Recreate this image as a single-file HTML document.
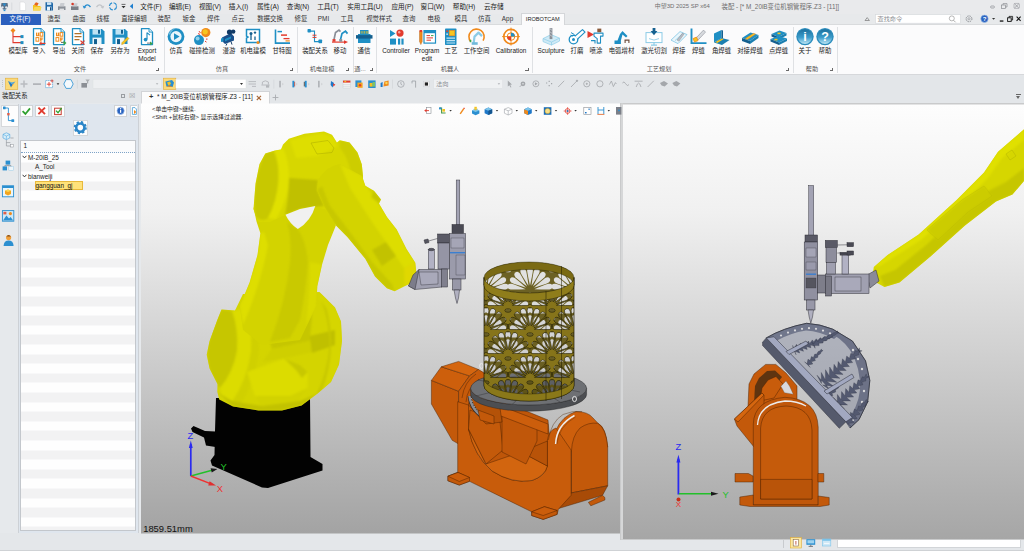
<!DOCTYPE html>
<html lang="zh-CN"><head><meta charset="utf-8"><title>ZW3D 2025</title>
<style>
*{box-sizing:border-box;margin:0;padding:0}
html,body{width:1024px;height:551px;overflow:hidden;background:#e4e7ea}
body{position:relative;font-family:"Liberation Sans","Noto Sans CJK SC",sans-serif;font-size:6.4px;color:#222;line-height:1}
.a{position:absolute;white-space:nowrap}
.c{position:absolute;white-space:nowrap;transform:translateX(-50%);text-align:center}
#title{left:0;top:0;width:1024px;height:14px;background:#e9eaec}
#tabs{left:0;top:14px;width:1024px;height:11px;background:#e7e9eb}
#ribbon{left:0;top:24.3px;width:1024px;height:50.5px;background:#fbfbfc;border-top:1px solid #d9dbdd;border-bottom:1px solid #d6d8db}
#tb{left:0;top:75px;width:1024px;height:15px;background:#e3e6e9}
#hdr{left:0;top:90px;width:1024px;height:14px;background:#e3e6e9}
.menu{top:3.5px;font-size:6.6px;color:#1a1a1a}
.tab{top:16.2px;font-size:6.4px;color:#333}
.lbl{top:46.5px;font-size:6.4px;color:#222;line-height:8px}
.grp{top:66px;font-size:6.2px;color:#555}
.sep{position:absolute;top:27px;width:1px;height:46px;background:#dfe1e4}
.dl{position:absolute;top:67.6px;width:3.2px;height:3.2px;border-right:0.9px solid #6a6a6a;border-bottom:0.9px solid #6a6a6a}
</style></head>
<body>
<div class="a" id="title"></div>
<div class="a" id="tabs"></div>
<div class="a" id="ribbon"></div>
<div class="a" id="tb"></div>
<div class="a" id="hdr"></div>
<div class="c menu" style="left:151px">文件(F)</div>
<div class="c menu" style="left:180px">编辑(E)</div>
<div class="c menu" style="left:210px">视图(V)</div>
<div class="c menu" style="left:238.5px">插入(I)</div>
<div class="c menu" style="left:268px">属性(A)</div>
<div class="c menu" style="left:298px">查询(N)</div>
<div class="c menu" style="left:328px">工具(T)</div>
<div class="c menu" style="left:365px">实用工具(U)</div>
<div class="c menu" style="left:402.5px">应用(P)</div>
<div class="c menu" style="left:432.5px">窗口(W)</div>
<div class="c menu" style="left:464px">帮助(H)</div>
<div class="c menu" style="left:493.8px">云存储</div>
<div class="c" id="t1" style="left:682.3px;top:3.7px;font-size:5.95px;color:#6e6e6e">中望3D 2025 SP x64</div>
<div class="c" id="t2" style="left:780.3px;top:3.5px;font-size:6.38px;color:#6e6e6e">装配 - [* M_20iB变位机钢管程序.Z3 - [11]]</div>
<div class="a" style="left:1px;top:14px;width:39.5px;height:10.5px;background:#2b5fbe"></div>
<div class="c tab" style="left:20px;color:#fff">文件(F)</div>
<div class="c tab" style="left:54px">造型</div>
<div class="c tab" style="left:79px">曲面</div>
<div class="c tab" style="left:103px">线框</div>
<div class="c tab" style="left:134px">直接编辑</div>
<div class="c tab" style="left:164px">装配</div>
<div class="c tab" style="left:189px">钣金</div>
<div class="c tab" style="left:213.5px">焊件</div>
<div class="c tab" style="left:238px">点云</div>
<div class="c tab" style="left:270px">数据交换</div>
<div class="c tab" style="left:301px">修复</div>
<div class="c tab" style="left:323.5px">PMI</div>
<div class="c tab" style="left:347px">工具</div>
<div class="c tab" style="left:379px">视觉样式</div>
<div class="c tab" style="left:409px">查询</div>
<div class="c tab" style="left:434px">电极</div>
<div class="c tab" style="left:461px">模具</div>
<div class="c tab" style="left:484.5px">仿真</div>
<div class="c tab" style="left:507.5px">App</div>
<div class="a" style="left:520.7px;top:13.3px;width:44.6px;height:12px;background:#fbfbfc;border:1px solid #d4d6d9;border-bottom:none"></div>
<div class="c tab" id="t3" style="left:542.8px;color:#222;font-size:5.6px;top:16.8px">IROBOTCAM</div>
<div class="c lbl" style="left:18px">模型库</div>
<div class="c lbl" style="left:39px">导入</div>
<div class="c lbl" style="left:59px">导出</div>
<div class="c lbl" style="left:78px">关闭</div>
<div class="c lbl" style="left:97px">保存</div>
<div class="c lbl" style="left:120px">另存为</div>
<div class="c lbl" style="left:147px">Export<br>Model</div>
<div class="c lbl" style="left:176px">仿真</div>
<div class="c lbl" style="left:202px">碰撞检测</div>
<div class="c lbl" style="left:229px">漫游</div>
<div class="c lbl" style="left:253px">机电建模</div>
<div class="c lbl" style="left:282px">甘特图</div>
<div class="c lbl" style="left:315px">装配关系</div>
<div class="c lbl" style="left:340px">移动</div>
<div class="c lbl" style="left:364px">通信</div>
<div class="c lbl" style="left:396px">Controller</div>
<div class="c lbl" style="left:427px">Program<br>edit</div>
<div class="c lbl" style="left:451px">工艺</div>
<div class="c lbl" style="left:476.5px">工作空间</div>
<div class="c lbl" style="left:511px">Calibration</div>
<div class="c lbl" style="left:551px">Sculpture</div>
<div class="c lbl" style="left:577px">打磨</div>
<div class="c lbl" style="left:596px">喷涂</div>
<div class="c lbl" style="left:621.5px">电弧增材</div>
<div class="c lbl" style="left:654px">激光切割</div>
<div class="c lbl" style="left:679px">焊接</div>
<div class="c lbl" style="left:698.5px">焊缝</div>
<div class="c lbl" style="left:721.5px">角焊缝</div>
<div class="c lbl" style="left:750px">对接焊缝</div>
<div class="c lbl" style="left:778.5px">点焊缝</div>
<div class="c lbl" style="left:805px">关于</div>
<div class="c lbl" style="left:825px">帮助</div>
<div class="sep" style="left:163.6px"></div>
<div class="sep" style="left:296.6px"></div>
<div class="sep" style="left:352.8px"></div>
<div class="sep" style="left:376.3px"></div>
<div class="sep" style="left:532.4px"></div>
<div class="sep" style="left:792.8px"></div>
<div class="sep" style="left:837px"></div>
<div class="c grp" style="left:80px">文件</div>
<div class="c grp" style="left:222px">仿真</div>
<div class="c grp" style="left:322px">机电建模</div>
<div class="c grp" style="left:360px">通...</div>
<div class="c grp" style="left:450px">机器人</div>
<div class="c grp" style="left:659px">工艺规划</div>
<div class="c grp" style="left:812px">帮助</div>
<div class="dl" style="left:156.3px"></div>
<div class="dl" style="left:289.6px"></div>
<div class="dl" style="left:346px"></div>
<div class="dl" style="left:369.6px"></div>
<div class="dl" style="left:525.4px"></div>
<div class="dl" style="left:785.6px"></div>
<div class="dl" style="left:829.8px"></div>
<!-- ===== header row: panel title + document tab ===== -->
<div class="a" style="left:2px;top:93px;font-size:6.4px;color:#222">装配关系</div>
<div class="a" style="left:121px;top:94px;width:4px;height:4px;border:1px solid #9a9da1"></div>
<div class="a" style="left:129px;top:92px;font-size:7px;color:#9a9da1">☒</div>
<div class="a" style="left:141px;top:91px;width:128.5px;height:13px;background:#fcfcfc;border:1px solid #d2d4d7;border-bottom:none"></div>
<div class="a" style="left:149px;top:93px;font-size:7.5px;font-weight:bold;color:#333;line-height:8px">+</div>
<div class="a" style="left:157px;top:93.5px;font-size:6.4px;color:#222">* M_20iB变位机钢管程序.Z3 - [11]</div>
<svg class="a" style="left:255.6px;top:94.6px" width="6" height="6" viewBox="0 0 6 6"><path d="M0.8,0.8 L5,5 M5,0.8 L0.8,5" stroke="#a8683a" stroke-width="1.1" fill="none"/></svg>
<svg class="a" style="left:271.6px;top:93.6px" width="7" height="7" viewBox="0 0 7 7"><path d="M3.5,0.6 L3.5,6.4 M0.6,3.5 L6.4,3.5" stroke="#a9acb0" stroke-width="0.9" fill="none"/></svg>
<div class="a" style="left:1015.5px;top:93.5px;width:5px;height:1px;background:#666"></div>
<div class="a" style="left:1015.5px;top:95.5px;width:0;height:0;border-left:2.5px solid transparent;border-right:2.5px solid transparent;border-top:3px solid #666"></div>

<!-- ===== left panel ===== -->
<div class="a" style="left:0;top:103px;width:141px;height:430.5px;background:#e6e9ec"></div>
<div class="a" style="left:1px;top:105px;width:17px;height:22px;background:#fdfdfd;border:1px solid #d6d8db;border-right:none"></div>
<div class="a" style="left:17.5px;top:104px;width:121.3px;height:429.5px;background:#dfe6ee;border-left:1px solid #cdd1d6;border-right:1px solid #cdd1d6"></div>
<!-- buttons -->
<div class="a" style="left:19.5px;top:104.5px;width:13.5px;height:12.5px;background:#fdfdfd;border:1px solid #d0d3d6"></div>
<div class="a" style="left:35px;top:104.5px;width:13.5px;height:12.5px;background:#fdfdfd;border:1px solid #d0d3d6"></div>
<div class="a" style="left:51px;top:104.5px;width:13.5px;height:12.5px;background:#fdfdfd;border:1px solid #d0d3d6"></div>
<div class="a" style="left:113.5px;top:104.5px;width:13.5px;height:12.5px;background:#fdfdfd;border:1px solid #d0d3d6"></div>
<div class="a" style="left:130px;top:104.5px;width:6.5px;height:12.5px;background:#fdfdfd;border:1px solid #d0d3d6;border-right:none"></div>
<div class="a" style="left:72.5px;top:119.5px;width:15.5px;height:16px;background:#fdfdfd;border:1px solid #d4d7da"></div>
<!-- list -->
<div class="a" style="left:19.5px;top:139.5px;width:116px;height:391.5px;border:1px solid #c3c7cc;background:repeating-linear-gradient(180deg,#fefefe 0,#fefefe 9.6px,#f2f2f3 9.6px,#f2f2f3 19.2px);background-position:0 11.5px;background-color:#fefefe"></div>
<div class="a" style="left:20.5px;top:140.5px;width:114px;height:12px;background:#fafbfc;border-bottom:1px dotted #7fa4c8"></div>
<div class="a" style="left:23.5px;top:143px;font-size:6.4px;color:#222">1</div>
<svg class="a" style="left:22px;top:155px" width="5" height="4" viewBox="0 0 5 4"><path d="M0.6,0.8 L2.5,2.9 L4.4,0.8" fill="none" stroke="#222" stroke-width="0.9"/></svg>
<div class="a" style="left:28px;top:154.5px;font-size:6.4px;color:#222">M-20iB_25</div>
<div class="a" style="left:35px;top:164.3px;font-size:6.4px;color:#222">A_Tool</div>
<svg class="a" style="left:22px;top:174.3px" width="5" height="4" viewBox="0 0 5 4"><path d="M0.6,0.8 L2.5,2.9 L4.4,0.8" fill="none" stroke="#222" stroke-width="0.9"/></svg>
<div class="a" style="left:28px;top:173.8px;font-size:6.4px;color:#222">bianweiji</div>
<div class="a" style="left:35px;top:181.2px;width:48px;height:9.3px;background:#ffe27a;border:1px solid #e8b93c"></div>
<div class="a" style="left:35.5px;top:183.2px;font-size:6.4px;color:#111">gangguan_gj</div>

<!-- ===== status bar ===== -->
<div class="a" style="left:0;top:533px;width:1024px;height:18px;background:#e4e7ea"></div>
<div class="a" style="left:0;top:549.5px;width:1024px;height:1.5px;background:#cfd2d5"></div>
<div class="a" style="left:837px;top:538px;width:184px;height:9.5px;background:#fff;border:1px solid #d2d5d8"></div>
<div class="a" style="left:783px;top:539px;width:1px;height:9px;background:#c8cbce"></div>
<svg class="a" style="left:0;top:0" width="1024" height="551" viewBox="0 0 1024 551">
<defs>
<linearGradient id="gL" x1="0" y1="0" x2="0" y2="1"><stop offset="0" stop-color="#fefefe"/><stop offset="0.25" stop-color="#f1f1f1"/><stop offset="1" stop-color="#a3a3a3"/></linearGradient>
<linearGradient id="gR" x1="0" y1="0" x2="0" y2="1"><stop offset="0" stop-color="#fdfdfd"/><stop offset="0.25" stop-color="#f0f0f0"/><stop offset="1" stop-color="#a6a6a6"/></linearGradient>
<clipPath id="cpL"><rect x="141" y="103.5" width="480" height="430"/></clipPath>
<clipPath id="cpR"><rect x="623" y="104.5" width="401" height="434.5"/></clipPath>

<pattern id="pFan" width="44" height="48" patternUnits="userSpaceOnUse" x="486" y="282"><rect width="44" height="48" fill="#fff"/><g fill="#000"><path transform="translate(17.57 23.22) rotate(-170.0)" d="M0,0 Q10.07,-2.32 14.64,-2.90 Q18.30,-2.90 18.30,0 Q18.30,2.90 14.64,2.90 Q10.07,2.32 0,0 Z"/><path transform="translate(18.10 21.75) rotate(-150.0)" d="M0,0 Q10.07,-2.32 14.64,-2.90 Q18.30,-2.90 18.30,0 Q18.30,2.90 14.64,2.90 Q10.07,2.32 0,0 Z"/><path transform="translate(19.11 20.55) rotate(-130.0)" d="M0,0 Q10.07,-2.32 14.64,-2.90 Q18.30,-2.90 18.30,0 Q18.30,2.90 14.64,2.90 Q10.07,2.32 0,0 Z"/><path transform="translate(20.46 19.77) rotate(-110.0)" d="M0,0 Q10.07,-2.32 14.64,-2.90 Q18.30,-2.90 18.30,0 Q18.30,2.90 14.64,2.90 Q10.07,2.32 0,0 Z"/><path transform="translate(22.00 19.50) rotate(-90.0)" d="M0,0 Q10.07,-2.32 14.64,-2.90 Q18.30,-2.90 18.30,0 Q18.30,2.90 14.64,2.90 Q10.07,2.32 0,0 Z"/><path transform="translate(23.54 19.77) rotate(-70.0)" d="M0,0 Q10.07,-2.32 14.64,-2.90 Q18.30,-2.90 18.30,0 Q18.30,2.90 14.64,2.90 Q10.07,2.32 0,0 Z"/><path transform="translate(24.89 20.55) rotate(-50.0)" d="M0,0 Q10.07,-2.32 14.64,-2.90 Q18.30,-2.90 18.30,0 Q18.30,2.90 14.64,2.90 Q10.07,2.32 0,0 Z"/><path transform="translate(25.90 21.75) rotate(-30.0)" d="M0,0 Q10.07,-2.32 14.64,-2.90 Q18.30,-2.90 18.30,0 Q18.30,2.90 14.64,2.90 Q10.07,2.32 0,0 Z"/><path transform="translate(26.43 23.22) rotate(-10.0)" d="M0,0 Q10.07,-2.32 14.64,-2.90 Q18.30,-2.90 18.30,0 Q18.30,2.90 14.64,2.90 Q10.07,2.32 0,0 Z"/><path transform="translate(-4.43 47.22) rotate(-170.0)" d="M0,0 Q10.07,-2.32 14.64,-2.90 Q18.30,-2.90 18.30,0 Q18.30,2.90 14.64,2.90 Q10.07,2.32 0,0 Z"/><path transform="translate(-3.90 45.75) rotate(-150.0)" d="M0,0 Q10.07,-2.32 14.64,-2.90 Q18.30,-2.90 18.30,0 Q18.30,2.90 14.64,2.90 Q10.07,2.32 0,0 Z"/><path transform="translate(-2.89 44.55) rotate(-130.0)" d="M0,0 Q10.07,-2.32 14.64,-2.90 Q18.30,-2.90 18.30,0 Q18.30,2.90 14.64,2.90 Q10.07,2.32 0,0 Z"/><path transform="translate(-1.54 43.77) rotate(-110.0)" d="M0,0 Q10.07,-2.32 14.64,-2.90 Q18.30,-2.90 18.30,0 Q18.30,2.90 14.64,2.90 Q10.07,2.32 0,0 Z"/><path transform="translate(0.00 43.50) rotate(-90.0)" d="M0,0 Q10.07,-2.32 14.64,-2.90 Q18.30,-2.90 18.30,0 Q18.30,2.90 14.64,2.90 Q10.07,2.32 0,0 Z"/><path transform="translate(1.54 43.77) rotate(-70.0)" d="M0,0 Q10.07,-2.32 14.64,-2.90 Q18.30,-2.90 18.30,0 Q18.30,2.90 14.64,2.90 Q10.07,2.32 0,0 Z"/><path transform="translate(2.89 44.55) rotate(-50.0)" d="M0,0 Q10.07,-2.32 14.64,-2.90 Q18.30,-2.90 18.30,0 Q18.30,2.90 14.64,2.90 Q10.07,2.32 0,0 Z"/><path transform="translate(3.90 45.75) rotate(-30.0)" d="M0,0 Q10.07,-2.32 14.64,-2.90 Q18.30,-2.90 18.30,0 Q18.30,2.90 14.64,2.90 Q10.07,2.32 0,0 Z"/><path transform="translate(4.43 47.22) rotate(-10.0)" d="M0,0 Q10.07,-2.32 14.64,-2.90 Q18.30,-2.90 18.30,0 Q18.30,2.90 14.64,2.90 Q10.07,2.32 0,0 Z"/><path transform="translate(39.57 47.22) rotate(-170.0)" d="M0,0 Q10.07,-2.32 14.64,-2.90 Q18.30,-2.90 18.30,0 Q18.30,2.90 14.64,2.90 Q10.07,2.32 0,0 Z"/><path transform="translate(40.10 45.75) rotate(-150.0)" d="M0,0 Q10.07,-2.32 14.64,-2.90 Q18.30,-2.90 18.30,0 Q18.30,2.90 14.64,2.90 Q10.07,2.32 0,0 Z"/><path transform="translate(41.11 44.55) rotate(-130.0)" d="M0,0 Q10.07,-2.32 14.64,-2.90 Q18.30,-2.90 18.30,0 Q18.30,2.90 14.64,2.90 Q10.07,2.32 0,0 Z"/><path transform="translate(42.46 43.77) rotate(-110.0)" d="M0,0 Q10.07,-2.32 14.64,-2.90 Q18.30,-2.90 18.30,0 Q18.30,2.90 14.64,2.90 Q10.07,2.32 0,0 Z"/><path transform="translate(44.00 43.50) rotate(-90.0)" d="M0,0 Q10.07,-2.32 14.64,-2.90 Q18.30,-2.90 18.30,0 Q18.30,2.90 14.64,2.90 Q10.07,2.32 0,0 Z"/><path transform="translate(45.54 43.77) rotate(-70.0)" d="M0,0 Q10.07,-2.32 14.64,-2.90 Q18.30,-2.90 18.30,0 Q18.30,2.90 14.64,2.90 Q10.07,2.32 0,0 Z"/><path transform="translate(46.89 44.55) rotate(-50.0)" d="M0,0 Q10.07,-2.32 14.64,-2.90 Q18.30,-2.90 18.30,0 Q18.30,2.90 14.64,2.90 Q10.07,2.32 0,0 Z"/><path transform="translate(47.90 45.75) rotate(-30.0)" d="M0,0 Q10.07,-2.32 14.64,-2.90 Q18.30,-2.90 18.30,0 Q18.30,2.90 14.64,2.90 Q10.07,2.32 0,0 Z"/><path transform="translate(48.43 47.22) rotate(-10.0)" d="M0,0 Q10.07,-2.32 14.64,-2.90 Q18.30,-2.90 18.30,0 Q18.30,2.90 14.64,2.90 Q10.07,2.32 0,0 Z"/><path transform="translate(-4.43 -0.78) rotate(-170.0)" d="M0,0 Q10.07,-2.32 14.64,-2.90 Q18.30,-2.90 18.30,0 Q18.30,2.90 14.64,2.90 Q10.07,2.32 0,0 Z"/><path transform="translate(-3.90 -2.25) rotate(-150.0)" d="M0,0 Q10.07,-2.32 14.64,-2.90 Q18.30,-2.90 18.30,0 Q18.30,2.90 14.64,2.90 Q10.07,2.32 0,0 Z"/><path transform="translate(-2.89 -3.45) rotate(-130.0)" d="M0,0 Q10.07,-2.32 14.64,-2.90 Q18.30,-2.90 18.30,0 Q18.30,2.90 14.64,2.90 Q10.07,2.32 0,0 Z"/><path transform="translate(-1.54 -4.23) rotate(-110.0)" d="M0,0 Q10.07,-2.32 14.64,-2.90 Q18.30,-2.90 18.30,0 Q18.30,2.90 14.64,2.90 Q10.07,2.32 0,0 Z"/><path transform="translate(0.00 -4.50) rotate(-90.0)" d="M0,0 Q10.07,-2.32 14.64,-2.90 Q18.30,-2.90 18.30,0 Q18.30,2.90 14.64,2.90 Q10.07,2.32 0,0 Z"/><path transform="translate(1.54 -4.23) rotate(-70.0)" d="M0,0 Q10.07,-2.32 14.64,-2.90 Q18.30,-2.90 18.30,0 Q18.30,2.90 14.64,2.90 Q10.07,2.32 0,0 Z"/><path transform="translate(2.89 -3.45) rotate(-50.0)" d="M0,0 Q10.07,-2.32 14.64,-2.90 Q18.30,-2.90 18.30,0 Q18.30,2.90 14.64,2.90 Q10.07,2.32 0,0 Z"/><path transform="translate(3.90 -2.25) rotate(-30.0)" d="M0,0 Q10.07,-2.32 14.64,-2.90 Q18.30,-2.90 18.30,0 Q18.30,2.90 14.64,2.90 Q10.07,2.32 0,0 Z"/><path transform="translate(4.43 -0.78) rotate(-10.0)" d="M0,0 Q10.07,-2.32 14.64,-2.90 Q18.30,-2.90 18.30,0 Q18.30,2.90 14.64,2.90 Q10.07,2.32 0,0 Z"/><path transform="translate(39.57 -0.78) rotate(-170.0)" d="M0,0 Q10.07,-2.32 14.64,-2.90 Q18.30,-2.90 18.30,0 Q18.30,2.90 14.64,2.90 Q10.07,2.32 0,0 Z"/><path transform="translate(40.10 -2.25) rotate(-150.0)" d="M0,0 Q10.07,-2.32 14.64,-2.90 Q18.30,-2.90 18.30,0 Q18.30,2.90 14.64,2.90 Q10.07,2.32 0,0 Z"/><path transform="translate(41.11 -3.45) rotate(-130.0)" d="M0,0 Q10.07,-2.32 14.64,-2.90 Q18.30,-2.90 18.30,0 Q18.30,2.90 14.64,2.90 Q10.07,2.32 0,0 Z"/><path transform="translate(42.46 -4.23) rotate(-110.0)" d="M0,0 Q10.07,-2.32 14.64,-2.90 Q18.30,-2.90 18.30,0 Q18.30,2.90 14.64,2.90 Q10.07,2.32 0,0 Z"/><path transform="translate(44.00 -4.50) rotate(-90.0)" d="M0,0 Q10.07,-2.32 14.64,-2.90 Q18.30,-2.90 18.30,0 Q18.30,2.90 14.64,2.90 Q10.07,2.32 0,0 Z"/><path transform="translate(45.54 -4.23) rotate(-70.0)" d="M0,0 Q10.07,-2.32 14.64,-2.90 Q18.30,-2.90 18.30,0 Q18.30,2.90 14.64,2.90 Q10.07,2.32 0,0 Z"/><path transform="translate(46.89 -3.45) rotate(-50.0)" d="M0,0 Q10.07,-2.32 14.64,-2.90 Q18.30,-2.90 18.30,0 Q18.30,2.90 14.64,2.90 Q10.07,2.32 0,0 Z"/><path transform="translate(47.90 -2.25) rotate(-30.0)" d="M0,0 Q10.07,-2.32 14.64,-2.90 Q18.30,-2.90 18.30,0 Q18.30,2.90 14.64,2.90 Q10.07,2.32 0,0 Z"/><path transform="translate(48.43 -0.78) rotate(-10.0)" d="M0,0 Q10.07,-2.32 14.64,-2.90 Q18.30,-2.90 18.30,0 Q18.30,2.90 14.64,2.90 Q10.07,2.32 0,0 Z"/><path transform="translate(17.57 71.22) rotate(-170.0)" d="M0,0 Q10.07,-2.32 14.64,-2.90 Q18.30,-2.90 18.30,0 Q18.30,2.90 14.64,2.90 Q10.07,2.32 0,0 Z"/><path transform="translate(18.10 69.75) rotate(-150.0)" d="M0,0 Q10.07,-2.32 14.64,-2.90 Q18.30,-2.90 18.30,0 Q18.30,2.90 14.64,2.90 Q10.07,2.32 0,0 Z"/><path transform="translate(19.11 68.55) rotate(-130.0)" d="M0,0 Q10.07,-2.32 14.64,-2.90 Q18.30,-2.90 18.30,0 Q18.30,2.90 14.64,2.90 Q10.07,2.32 0,0 Z"/><path transform="translate(20.46 67.77) rotate(-110.0)" d="M0,0 Q10.07,-2.32 14.64,-2.90 Q18.30,-2.90 18.30,0 Q18.30,2.90 14.64,2.90 Q10.07,2.32 0,0 Z"/><path transform="translate(22.00 67.50) rotate(-90.0)" d="M0,0 Q10.07,-2.32 14.64,-2.90 Q18.30,-2.90 18.30,0 Q18.30,2.90 14.64,2.90 Q10.07,2.32 0,0 Z"/><path transform="translate(23.54 67.77) rotate(-70.0)" d="M0,0 Q10.07,-2.32 14.64,-2.90 Q18.30,-2.90 18.30,0 Q18.30,2.90 14.64,2.90 Q10.07,2.32 0,0 Z"/><path transform="translate(24.89 68.55) rotate(-50.0)" d="M0,0 Q10.07,-2.32 14.64,-2.90 Q18.30,-2.90 18.30,0 Q18.30,2.90 14.64,2.90 Q10.07,2.32 0,0 Z"/><path transform="translate(25.90 69.75) rotate(-30.0)" d="M0,0 Q10.07,-2.32 14.64,-2.90 Q18.30,-2.90 18.30,0 Q18.30,2.90 14.64,2.90 Q10.07,2.32 0,0 Z"/><path transform="translate(26.43 71.22) rotate(-10.0)" d="M0,0 Q10.07,-2.32 14.64,-2.90 Q18.30,-2.90 18.30,0 Q18.30,2.90 14.64,2.90 Q10.07,2.32 0,0 Z"/><path transform="translate(17.57 -24.78) rotate(-170.0)" d="M0,0 Q10.07,-2.32 14.64,-2.90 Q18.30,-2.90 18.30,0 Q18.30,2.90 14.64,2.90 Q10.07,2.32 0,0 Z"/><path transform="translate(18.10 -26.25) rotate(-150.0)" d="M0,0 Q10.07,-2.32 14.64,-2.90 Q18.30,-2.90 18.30,0 Q18.30,2.90 14.64,2.90 Q10.07,2.32 0,0 Z"/><path transform="translate(19.11 -27.45) rotate(-130.0)" d="M0,0 Q10.07,-2.32 14.64,-2.90 Q18.30,-2.90 18.30,0 Q18.30,2.90 14.64,2.90 Q10.07,2.32 0,0 Z"/><path transform="translate(20.46 -28.23) rotate(-110.0)" d="M0,0 Q10.07,-2.32 14.64,-2.90 Q18.30,-2.90 18.30,0 Q18.30,2.90 14.64,2.90 Q10.07,2.32 0,0 Z"/><path transform="translate(22.00 -28.50) rotate(-90.0)" d="M0,0 Q10.07,-2.32 14.64,-2.90 Q18.30,-2.90 18.30,0 Q18.30,2.90 14.64,2.90 Q10.07,2.32 0,0 Z"/><path transform="translate(23.54 -28.23) rotate(-70.0)" d="M0,0 Q10.07,-2.32 14.64,-2.90 Q18.30,-2.90 18.30,0 Q18.30,2.90 14.64,2.90 Q10.07,2.32 0,0 Z"/><path transform="translate(24.89 -27.45) rotate(-50.0)" d="M0,0 Q10.07,-2.32 14.64,-2.90 Q18.30,-2.90 18.30,0 Q18.30,2.90 14.64,2.90 Q10.07,2.32 0,0 Z"/><path transform="translate(25.90 -26.25) rotate(-30.0)" d="M0,0 Q10.07,-2.32 14.64,-2.90 Q18.30,-2.90 18.30,0 Q18.30,2.90 14.64,2.90 Q10.07,2.32 0,0 Z"/><path transform="translate(26.43 -24.78) rotate(-10.0)" d="M0,0 Q10.07,-2.32 14.64,-2.90 Q18.30,-2.90 18.30,0 Q18.30,2.90 14.64,2.90 Q10.07,2.32 0,0 Z"/><ellipse cx="22" cy="28.5" rx="3.2" ry="1.8"/><ellipse cx="0" cy="4.5" rx="3.2" ry="1.8"/><ellipse cx="44" cy="4.5" rx="3.2" ry="1.8"/><ellipse cx="0" cy="52.5" rx="3.2" ry="1.8"/></g></pattern>
<pattern id="pFanB" width="44" height="48" patternUnits="userSpaceOnUse" x="464" y="266"><rect width="44" height="48" fill="#fff"/><g fill="#000"><path transform="translate(17.57 23.22) rotate(-170.0)" d="M0,0 Q10.07,-2.32 14.64,-2.90 Q18.30,-2.90 18.30,0 Q18.30,2.90 14.64,2.90 Q10.07,2.32 0,0 Z"/><path transform="translate(18.10 21.75) rotate(-150.0)" d="M0,0 Q10.07,-2.32 14.64,-2.90 Q18.30,-2.90 18.30,0 Q18.30,2.90 14.64,2.90 Q10.07,2.32 0,0 Z"/><path transform="translate(19.11 20.55) rotate(-130.0)" d="M0,0 Q10.07,-2.32 14.64,-2.90 Q18.30,-2.90 18.30,0 Q18.30,2.90 14.64,2.90 Q10.07,2.32 0,0 Z"/><path transform="translate(20.46 19.77) rotate(-110.0)" d="M0,0 Q10.07,-2.32 14.64,-2.90 Q18.30,-2.90 18.30,0 Q18.30,2.90 14.64,2.90 Q10.07,2.32 0,0 Z"/><path transform="translate(22.00 19.50) rotate(-90.0)" d="M0,0 Q10.07,-2.32 14.64,-2.90 Q18.30,-2.90 18.30,0 Q18.30,2.90 14.64,2.90 Q10.07,2.32 0,0 Z"/><path transform="translate(23.54 19.77) rotate(-70.0)" d="M0,0 Q10.07,-2.32 14.64,-2.90 Q18.30,-2.90 18.30,0 Q18.30,2.90 14.64,2.90 Q10.07,2.32 0,0 Z"/><path transform="translate(24.89 20.55) rotate(-50.0)" d="M0,0 Q10.07,-2.32 14.64,-2.90 Q18.30,-2.90 18.30,0 Q18.30,2.90 14.64,2.90 Q10.07,2.32 0,0 Z"/><path transform="translate(25.90 21.75) rotate(-30.0)" d="M0,0 Q10.07,-2.32 14.64,-2.90 Q18.30,-2.90 18.30,0 Q18.30,2.90 14.64,2.90 Q10.07,2.32 0,0 Z"/><path transform="translate(26.43 23.22) rotate(-10.0)" d="M0,0 Q10.07,-2.32 14.64,-2.90 Q18.30,-2.90 18.30,0 Q18.30,2.90 14.64,2.90 Q10.07,2.32 0,0 Z"/><path transform="translate(-4.43 47.22) rotate(-170.0)" d="M0,0 Q10.07,-2.32 14.64,-2.90 Q18.30,-2.90 18.30,0 Q18.30,2.90 14.64,2.90 Q10.07,2.32 0,0 Z"/><path transform="translate(-3.90 45.75) rotate(-150.0)" d="M0,0 Q10.07,-2.32 14.64,-2.90 Q18.30,-2.90 18.30,0 Q18.30,2.90 14.64,2.90 Q10.07,2.32 0,0 Z"/><path transform="translate(-2.89 44.55) rotate(-130.0)" d="M0,0 Q10.07,-2.32 14.64,-2.90 Q18.30,-2.90 18.30,0 Q18.30,2.90 14.64,2.90 Q10.07,2.32 0,0 Z"/><path transform="translate(-1.54 43.77) rotate(-110.0)" d="M0,0 Q10.07,-2.32 14.64,-2.90 Q18.30,-2.90 18.30,0 Q18.30,2.90 14.64,2.90 Q10.07,2.32 0,0 Z"/><path transform="translate(0.00 43.50) rotate(-90.0)" d="M0,0 Q10.07,-2.32 14.64,-2.90 Q18.30,-2.90 18.30,0 Q18.30,2.90 14.64,2.90 Q10.07,2.32 0,0 Z"/><path transform="translate(1.54 43.77) rotate(-70.0)" d="M0,0 Q10.07,-2.32 14.64,-2.90 Q18.30,-2.90 18.30,0 Q18.30,2.90 14.64,2.90 Q10.07,2.32 0,0 Z"/><path transform="translate(2.89 44.55) rotate(-50.0)" d="M0,0 Q10.07,-2.32 14.64,-2.90 Q18.30,-2.90 18.30,0 Q18.30,2.90 14.64,2.90 Q10.07,2.32 0,0 Z"/><path transform="translate(3.90 45.75) rotate(-30.0)" d="M0,0 Q10.07,-2.32 14.64,-2.90 Q18.30,-2.90 18.30,0 Q18.30,2.90 14.64,2.90 Q10.07,2.32 0,0 Z"/><path transform="translate(4.43 47.22) rotate(-10.0)" d="M0,0 Q10.07,-2.32 14.64,-2.90 Q18.30,-2.90 18.30,0 Q18.30,2.90 14.64,2.90 Q10.07,2.32 0,0 Z"/><path transform="translate(39.57 47.22) rotate(-170.0)" d="M0,0 Q10.07,-2.32 14.64,-2.90 Q18.30,-2.90 18.30,0 Q18.30,2.90 14.64,2.90 Q10.07,2.32 0,0 Z"/><path transform="translate(40.10 45.75) rotate(-150.0)" d="M0,0 Q10.07,-2.32 14.64,-2.90 Q18.30,-2.90 18.30,0 Q18.30,2.90 14.64,2.90 Q10.07,2.32 0,0 Z"/><path transform="translate(41.11 44.55) rotate(-130.0)" d="M0,0 Q10.07,-2.32 14.64,-2.90 Q18.30,-2.90 18.30,0 Q18.30,2.90 14.64,2.90 Q10.07,2.32 0,0 Z"/><path transform="translate(42.46 43.77) rotate(-110.0)" d="M0,0 Q10.07,-2.32 14.64,-2.90 Q18.30,-2.90 18.30,0 Q18.30,2.90 14.64,2.90 Q10.07,2.32 0,0 Z"/><path transform="translate(44.00 43.50) rotate(-90.0)" d="M0,0 Q10.07,-2.32 14.64,-2.90 Q18.30,-2.90 18.30,0 Q18.30,2.90 14.64,2.90 Q10.07,2.32 0,0 Z"/><path transform="translate(45.54 43.77) rotate(-70.0)" d="M0,0 Q10.07,-2.32 14.64,-2.90 Q18.30,-2.90 18.30,0 Q18.30,2.90 14.64,2.90 Q10.07,2.32 0,0 Z"/><path transform="translate(46.89 44.55) rotate(-50.0)" d="M0,0 Q10.07,-2.32 14.64,-2.90 Q18.30,-2.90 18.30,0 Q18.30,2.90 14.64,2.90 Q10.07,2.32 0,0 Z"/><path transform="translate(47.90 45.75) rotate(-30.0)" d="M0,0 Q10.07,-2.32 14.64,-2.90 Q18.30,-2.90 18.30,0 Q18.30,2.90 14.64,2.90 Q10.07,2.32 0,0 Z"/><path transform="translate(48.43 47.22) rotate(-10.0)" d="M0,0 Q10.07,-2.32 14.64,-2.90 Q18.30,-2.90 18.30,0 Q18.30,2.90 14.64,2.90 Q10.07,2.32 0,0 Z"/><path transform="translate(-4.43 -0.78) rotate(-170.0)" d="M0,0 Q10.07,-2.32 14.64,-2.90 Q18.30,-2.90 18.30,0 Q18.30,2.90 14.64,2.90 Q10.07,2.32 0,0 Z"/><path transform="translate(-3.90 -2.25) rotate(-150.0)" d="M0,0 Q10.07,-2.32 14.64,-2.90 Q18.30,-2.90 18.30,0 Q18.30,2.90 14.64,2.90 Q10.07,2.32 0,0 Z"/><path transform="translate(-2.89 -3.45) rotate(-130.0)" d="M0,0 Q10.07,-2.32 14.64,-2.90 Q18.30,-2.90 18.30,0 Q18.30,2.90 14.64,2.90 Q10.07,2.32 0,0 Z"/><path transform="translate(-1.54 -4.23) rotate(-110.0)" d="M0,0 Q10.07,-2.32 14.64,-2.90 Q18.30,-2.90 18.30,0 Q18.30,2.90 14.64,2.90 Q10.07,2.32 0,0 Z"/><path transform="translate(0.00 -4.50) rotate(-90.0)" d="M0,0 Q10.07,-2.32 14.64,-2.90 Q18.30,-2.90 18.30,0 Q18.30,2.90 14.64,2.90 Q10.07,2.32 0,0 Z"/><path transform="translate(1.54 -4.23) rotate(-70.0)" d="M0,0 Q10.07,-2.32 14.64,-2.90 Q18.30,-2.90 18.30,0 Q18.30,2.90 14.64,2.90 Q10.07,2.32 0,0 Z"/><path transform="translate(2.89 -3.45) rotate(-50.0)" d="M0,0 Q10.07,-2.32 14.64,-2.90 Q18.30,-2.90 18.30,0 Q18.30,2.90 14.64,2.90 Q10.07,2.32 0,0 Z"/><path transform="translate(3.90 -2.25) rotate(-30.0)" d="M0,0 Q10.07,-2.32 14.64,-2.90 Q18.30,-2.90 18.30,0 Q18.30,2.90 14.64,2.90 Q10.07,2.32 0,0 Z"/><path transform="translate(4.43 -0.78) rotate(-10.0)" d="M0,0 Q10.07,-2.32 14.64,-2.90 Q18.30,-2.90 18.30,0 Q18.30,2.90 14.64,2.90 Q10.07,2.32 0,0 Z"/><path transform="translate(39.57 -0.78) rotate(-170.0)" d="M0,0 Q10.07,-2.32 14.64,-2.90 Q18.30,-2.90 18.30,0 Q18.30,2.90 14.64,2.90 Q10.07,2.32 0,0 Z"/><path transform="translate(40.10 -2.25) rotate(-150.0)" d="M0,0 Q10.07,-2.32 14.64,-2.90 Q18.30,-2.90 18.30,0 Q18.30,2.90 14.64,2.90 Q10.07,2.32 0,0 Z"/><path transform="translate(41.11 -3.45) rotate(-130.0)" d="M0,0 Q10.07,-2.32 14.64,-2.90 Q18.30,-2.90 18.30,0 Q18.30,2.90 14.64,2.90 Q10.07,2.32 0,0 Z"/><path transform="translate(42.46 -4.23) rotate(-110.0)" d="M0,0 Q10.07,-2.32 14.64,-2.90 Q18.30,-2.90 18.30,0 Q18.30,2.90 14.64,2.90 Q10.07,2.32 0,0 Z"/><path transform="translate(44.00 -4.50) rotate(-90.0)" d="M0,0 Q10.07,-2.32 14.64,-2.90 Q18.30,-2.90 18.30,0 Q18.30,2.90 14.64,2.90 Q10.07,2.32 0,0 Z"/><path transform="translate(45.54 -4.23) rotate(-70.0)" d="M0,0 Q10.07,-2.32 14.64,-2.90 Q18.30,-2.90 18.30,0 Q18.30,2.90 14.64,2.90 Q10.07,2.32 0,0 Z"/><path transform="translate(46.89 -3.45) rotate(-50.0)" d="M0,0 Q10.07,-2.32 14.64,-2.90 Q18.30,-2.90 18.30,0 Q18.30,2.90 14.64,2.90 Q10.07,2.32 0,0 Z"/><path transform="translate(47.90 -2.25) rotate(-30.0)" d="M0,0 Q10.07,-2.32 14.64,-2.90 Q18.30,-2.90 18.30,0 Q18.30,2.90 14.64,2.90 Q10.07,2.32 0,0 Z"/><path transform="translate(48.43 -0.78) rotate(-10.0)" d="M0,0 Q10.07,-2.32 14.64,-2.90 Q18.30,-2.90 18.30,0 Q18.30,2.90 14.64,2.90 Q10.07,2.32 0,0 Z"/><path transform="translate(17.57 71.22) rotate(-170.0)" d="M0,0 Q10.07,-2.32 14.64,-2.90 Q18.30,-2.90 18.30,0 Q18.30,2.90 14.64,2.90 Q10.07,2.32 0,0 Z"/><path transform="translate(18.10 69.75) rotate(-150.0)" d="M0,0 Q10.07,-2.32 14.64,-2.90 Q18.30,-2.90 18.30,0 Q18.30,2.90 14.64,2.90 Q10.07,2.32 0,0 Z"/><path transform="translate(19.11 68.55) rotate(-130.0)" d="M0,0 Q10.07,-2.32 14.64,-2.90 Q18.30,-2.90 18.30,0 Q18.30,2.90 14.64,2.90 Q10.07,2.32 0,0 Z"/><path transform="translate(20.46 67.77) rotate(-110.0)" d="M0,0 Q10.07,-2.32 14.64,-2.90 Q18.30,-2.90 18.30,0 Q18.30,2.90 14.64,2.90 Q10.07,2.32 0,0 Z"/><path transform="translate(22.00 67.50) rotate(-90.0)" d="M0,0 Q10.07,-2.32 14.64,-2.90 Q18.30,-2.90 18.30,0 Q18.30,2.90 14.64,2.90 Q10.07,2.32 0,0 Z"/><path transform="translate(23.54 67.77) rotate(-70.0)" d="M0,0 Q10.07,-2.32 14.64,-2.90 Q18.30,-2.90 18.30,0 Q18.30,2.90 14.64,2.90 Q10.07,2.32 0,0 Z"/><path transform="translate(24.89 68.55) rotate(-50.0)" d="M0,0 Q10.07,-2.32 14.64,-2.90 Q18.30,-2.90 18.30,0 Q18.30,2.90 14.64,2.90 Q10.07,2.32 0,0 Z"/><path transform="translate(25.90 69.75) rotate(-30.0)" d="M0,0 Q10.07,-2.32 14.64,-2.90 Q18.30,-2.90 18.30,0 Q18.30,2.90 14.64,2.90 Q10.07,2.32 0,0 Z"/><path transform="translate(26.43 71.22) rotate(-10.0)" d="M0,0 Q10.07,-2.32 14.64,-2.90 Q18.30,-2.90 18.30,0 Q18.30,2.90 14.64,2.90 Q10.07,2.32 0,0 Z"/><path transform="translate(17.57 -24.78) rotate(-170.0)" d="M0,0 Q10.07,-2.32 14.64,-2.90 Q18.30,-2.90 18.30,0 Q18.30,2.90 14.64,2.90 Q10.07,2.32 0,0 Z"/><path transform="translate(18.10 -26.25) rotate(-150.0)" d="M0,0 Q10.07,-2.32 14.64,-2.90 Q18.30,-2.90 18.30,0 Q18.30,2.90 14.64,2.90 Q10.07,2.32 0,0 Z"/><path transform="translate(19.11 -27.45) rotate(-130.0)" d="M0,0 Q10.07,-2.32 14.64,-2.90 Q18.30,-2.90 18.30,0 Q18.30,2.90 14.64,2.90 Q10.07,2.32 0,0 Z"/><path transform="translate(20.46 -28.23) rotate(-110.0)" d="M0,0 Q10.07,-2.32 14.64,-2.90 Q18.30,-2.90 18.30,0 Q18.30,2.90 14.64,2.90 Q10.07,2.32 0,0 Z"/><path transform="translate(22.00 -28.50) rotate(-90.0)" d="M0,0 Q10.07,-2.32 14.64,-2.90 Q18.30,-2.90 18.30,0 Q18.30,2.90 14.64,2.90 Q10.07,2.32 0,0 Z"/><path transform="translate(23.54 -28.23) rotate(-70.0)" d="M0,0 Q10.07,-2.32 14.64,-2.90 Q18.30,-2.90 18.30,0 Q18.30,2.90 14.64,2.90 Q10.07,2.32 0,0 Z"/><path transform="translate(24.89 -27.45) rotate(-50.0)" d="M0,0 Q10.07,-2.32 14.64,-2.90 Q18.30,-2.90 18.30,0 Q18.30,2.90 14.64,2.90 Q10.07,2.32 0,0 Z"/><path transform="translate(25.90 -26.25) rotate(-30.0)" d="M0,0 Q10.07,-2.32 14.64,-2.90 Q18.30,-2.90 18.30,0 Q18.30,2.90 14.64,2.90 Q10.07,2.32 0,0 Z"/><path transform="translate(26.43 -24.78) rotate(-10.0)" d="M0,0 Q10.07,-2.32 14.64,-2.90 Q18.30,-2.90 18.30,0 Q18.30,2.90 14.64,2.90 Q10.07,2.32 0,0 Z"/><ellipse cx="22" cy="28.5" rx="3.2" ry="1.8"/><ellipse cx="0" cy="4.5" rx="3.2" ry="1.8"/><ellipse cx="44" cy="4.5" rx="3.2" ry="1.8"/><ellipse cx="0" cy="52.5" rx="3.2" ry="1.8"/></g></pattern>
<pattern id="pOut" width="44" height="48" patternUnits="userSpaceOnUse" x="486" y="282"><g fill="none" stroke="#1c1800" stroke-width="0.55"><path transform="translate(17.57 23.22) rotate(-170.0)" d="M0,0 Q10.07,-2.32 14.64,-2.90 Q18.30,-2.90 18.30,0 Q18.30,2.90 14.64,2.90 Q10.07,2.32 0,0 Z"/><path transform="translate(18.10 21.75) rotate(-150.0)" d="M0,0 Q10.07,-2.32 14.64,-2.90 Q18.30,-2.90 18.30,0 Q18.30,2.90 14.64,2.90 Q10.07,2.32 0,0 Z"/><path transform="translate(19.11 20.55) rotate(-130.0)" d="M0,0 Q10.07,-2.32 14.64,-2.90 Q18.30,-2.90 18.30,0 Q18.30,2.90 14.64,2.90 Q10.07,2.32 0,0 Z"/><path transform="translate(20.46 19.77) rotate(-110.0)" d="M0,0 Q10.07,-2.32 14.64,-2.90 Q18.30,-2.90 18.30,0 Q18.30,2.90 14.64,2.90 Q10.07,2.32 0,0 Z"/><path transform="translate(22.00 19.50) rotate(-90.0)" d="M0,0 Q10.07,-2.32 14.64,-2.90 Q18.30,-2.90 18.30,0 Q18.30,2.90 14.64,2.90 Q10.07,2.32 0,0 Z"/><path transform="translate(23.54 19.77) rotate(-70.0)" d="M0,0 Q10.07,-2.32 14.64,-2.90 Q18.30,-2.90 18.30,0 Q18.30,2.90 14.64,2.90 Q10.07,2.32 0,0 Z"/><path transform="translate(24.89 20.55) rotate(-50.0)" d="M0,0 Q10.07,-2.32 14.64,-2.90 Q18.30,-2.90 18.30,0 Q18.30,2.90 14.64,2.90 Q10.07,2.32 0,0 Z"/><path transform="translate(25.90 21.75) rotate(-30.0)" d="M0,0 Q10.07,-2.32 14.64,-2.90 Q18.30,-2.90 18.30,0 Q18.30,2.90 14.64,2.90 Q10.07,2.32 0,0 Z"/><path transform="translate(26.43 23.22) rotate(-10.0)" d="M0,0 Q10.07,-2.32 14.64,-2.90 Q18.30,-2.90 18.30,0 Q18.30,2.90 14.64,2.90 Q10.07,2.32 0,0 Z"/><path transform="translate(-4.43 47.22) rotate(-170.0)" d="M0,0 Q10.07,-2.32 14.64,-2.90 Q18.30,-2.90 18.30,0 Q18.30,2.90 14.64,2.90 Q10.07,2.32 0,0 Z"/><path transform="translate(-3.90 45.75) rotate(-150.0)" d="M0,0 Q10.07,-2.32 14.64,-2.90 Q18.30,-2.90 18.30,0 Q18.30,2.90 14.64,2.90 Q10.07,2.32 0,0 Z"/><path transform="translate(-2.89 44.55) rotate(-130.0)" d="M0,0 Q10.07,-2.32 14.64,-2.90 Q18.30,-2.90 18.30,0 Q18.30,2.90 14.64,2.90 Q10.07,2.32 0,0 Z"/><path transform="translate(-1.54 43.77) rotate(-110.0)" d="M0,0 Q10.07,-2.32 14.64,-2.90 Q18.30,-2.90 18.30,0 Q18.30,2.90 14.64,2.90 Q10.07,2.32 0,0 Z"/><path transform="translate(0.00 43.50) rotate(-90.0)" d="M0,0 Q10.07,-2.32 14.64,-2.90 Q18.30,-2.90 18.30,0 Q18.30,2.90 14.64,2.90 Q10.07,2.32 0,0 Z"/><path transform="translate(1.54 43.77) rotate(-70.0)" d="M0,0 Q10.07,-2.32 14.64,-2.90 Q18.30,-2.90 18.30,0 Q18.30,2.90 14.64,2.90 Q10.07,2.32 0,0 Z"/><path transform="translate(2.89 44.55) rotate(-50.0)" d="M0,0 Q10.07,-2.32 14.64,-2.90 Q18.30,-2.90 18.30,0 Q18.30,2.90 14.64,2.90 Q10.07,2.32 0,0 Z"/><path transform="translate(3.90 45.75) rotate(-30.0)" d="M0,0 Q10.07,-2.32 14.64,-2.90 Q18.30,-2.90 18.30,0 Q18.30,2.90 14.64,2.90 Q10.07,2.32 0,0 Z"/><path transform="translate(4.43 47.22) rotate(-10.0)" d="M0,0 Q10.07,-2.32 14.64,-2.90 Q18.30,-2.90 18.30,0 Q18.30,2.90 14.64,2.90 Q10.07,2.32 0,0 Z"/><path transform="translate(39.57 47.22) rotate(-170.0)" d="M0,0 Q10.07,-2.32 14.64,-2.90 Q18.30,-2.90 18.30,0 Q18.30,2.90 14.64,2.90 Q10.07,2.32 0,0 Z"/><path transform="translate(40.10 45.75) rotate(-150.0)" d="M0,0 Q10.07,-2.32 14.64,-2.90 Q18.30,-2.90 18.30,0 Q18.30,2.90 14.64,2.90 Q10.07,2.32 0,0 Z"/><path transform="translate(41.11 44.55) rotate(-130.0)" d="M0,0 Q10.07,-2.32 14.64,-2.90 Q18.30,-2.90 18.30,0 Q18.30,2.90 14.64,2.90 Q10.07,2.32 0,0 Z"/><path transform="translate(42.46 43.77) rotate(-110.0)" d="M0,0 Q10.07,-2.32 14.64,-2.90 Q18.30,-2.90 18.30,0 Q18.30,2.90 14.64,2.90 Q10.07,2.32 0,0 Z"/><path transform="translate(44.00 43.50) rotate(-90.0)" d="M0,0 Q10.07,-2.32 14.64,-2.90 Q18.30,-2.90 18.30,0 Q18.30,2.90 14.64,2.90 Q10.07,2.32 0,0 Z"/><path transform="translate(45.54 43.77) rotate(-70.0)" d="M0,0 Q10.07,-2.32 14.64,-2.90 Q18.30,-2.90 18.30,0 Q18.30,2.90 14.64,2.90 Q10.07,2.32 0,0 Z"/><path transform="translate(46.89 44.55) rotate(-50.0)" d="M0,0 Q10.07,-2.32 14.64,-2.90 Q18.30,-2.90 18.30,0 Q18.30,2.90 14.64,2.90 Q10.07,2.32 0,0 Z"/><path transform="translate(47.90 45.75) rotate(-30.0)" d="M0,0 Q10.07,-2.32 14.64,-2.90 Q18.30,-2.90 18.30,0 Q18.30,2.90 14.64,2.90 Q10.07,2.32 0,0 Z"/><path transform="translate(48.43 47.22) rotate(-10.0)" d="M0,0 Q10.07,-2.32 14.64,-2.90 Q18.30,-2.90 18.30,0 Q18.30,2.90 14.64,2.90 Q10.07,2.32 0,0 Z"/><path transform="translate(-4.43 -0.78) rotate(-170.0)" d="M0,0 Q10.07,-2.32 14.64,-2.90 Q18.30,-2.90 18.30,0 Q18.30,2.90 14.64,2.90 Q10.07,2.32 0,0 Z"/><path transform="translate(-3.90 -2.25) rotate(-150.0)" d="M0,0 Q10.07,-2.32 14.64,-2.90 Q18.30,-2.90 18.30,0 Q18.30,2.90 14.64,2.90 Q10.07,2.32 0,0 Z"/><path transform="translate(-2.89 -3.45) rotate(-130.0)" d="M0,0 Q10.07,-2.32 14.64,-2.90 Q18.30,-2.90 18.30,0 Q18.30,2.90 14.64,2.90 Q10.07,2.32 0,0 Z"/><path transform="translate(-1.54 -4.23) rotate(-110.0)" d="M0,0 Q10.07,-2.32 14.64,-2.90 Q18.30,-2.90 18.30,0 Q18.30,2.90 14.64,2.90 Q10.07,2.32 0,0 Z"/><path transform="translate(0.00 -4.50) rotate(-90.0)" d="M0,0 Q10.07,-2.32 14.64,-2.90 Q18.30,-2.90 18.30,0 Q18.30,2.90 14.64,2.90 Q10.07,2.32 0,0 Z"/><path transform="translate(1.54 -4.23) rotate(-70.0)" d="M0,0 Q10.07,-2.32 14.64,-2.90 Q18.30,-2.90 18.30,0 Q18.30,2.90 14.64,2.90 Q10.07,2.32 0,0 Z"/><path transform="translate(2.89 -3.45) rotate(-50.0)" d="M0,0 Q10.07,-2.32 14.64,-2.90 Q18.30,-2.90 18.30,0 Q18.30,2.90 14.64,2.90 Q10.07,2.32 0,0 Z"/><path transform="translate(3.90 -2.25) rotate(-30.0)" d="M0,0 Q10.07,-2.32 14.64,-2.90 Q18.30,-2.90 18.30,0 Q18.30,2.90 14.64,2.90 Q10.07,2.32 0,0 Z"/><path transform="translate(4.43 -0.78) rotate(-10.0)" d="M0,0 Q10.07,-2.32 14.64,-2.90 Q18.30,-2.90 18.30,0 Q18.30,2.90 14.64,2.90 Q10.07,2.32 0,0 Z"/><path transform="translate(39.57 -0.78) rotate(-170.0)" d="M0,0 Q10.07,-2.32 14.64,-2.90 Q18.30,-2.90 18.30,0 Q18.30,2.90 14.64,2.90 Q10.07,2.32 0,0 Z"/><path transform="translate(40.10 -2.25) rotate(-150.0)" d="M0,0 Q10.07,-2.32 14.64,-2.90 Q18.30,-2.90 18.30,0 Q18.30,2.90 14.64,2.90 Q10.07,2.32 0,0 Z"/><path transform="translate(41.11 -3.45) rotate(-130.0)" d="M0,0 Q10.07,-2.32 14.64,-2.90 Q18.30,-2.90 18.30,0 Q18.30,2.90 14.64,2.90 Q10.07,2.32 0,0 Z"/><path transform="translate(42.46 -4.23) rotate(-110.0)" d="M0,0 Q10.07,-2.32 14.64,-2.90 Q18.30,-2.90 18.30,0 Q18.30,2.90 14.64,2.90 Q10.07,2.32 0,0 Z"/><path transform="translate(44.00 -4.50) rotate(-90.0)" d="M0,0 Q10.07,-2.32 14.64,-2.90 Q18.30,-2.90 18.30,0 Q18.30,2.90 14.64,2.90 Q10.07,2.32 0,0 Z"/><path transform="translate(45.54 -4.23) rotate(-70.0)" d="M0,0 Q10.07,-2.32 14.64,-2.90 Q18.30,-2.90 18.30,0 Q18.30,2.90 14.64,2.90 Q10.07,2.32 0,0 Z"/><path transform="translate(46.89 -3.45) rotate(-50.0)" d="M0,0 Q10.07,-2.32 14.64,-2.90 Q18.30,-2.90 18.30,0 Q18.30,2.90 14.64,2.90 Q10.07,2.32 0,0 Z"/><path transform="translate(47.90 -2.25) rotate(-30.0)" d="M0,0 Q10.07,-2.32 14.64,-2.90 Q18.30,-2.90 18.30,0 Q18.30,2.90 14.64,2.90 Q10.07,2.32 0,0 Z"/><path transform="translate(48.43 -0.78) rotate(-10.0)" d="M0,0 Q10.07,-2.32 14.64,-2.90 Q18.30,-2.90 18.30,0 Q18.30,2.90 14.64,2.90 Q10.07,2.32 0,0 Z"/><path transform="translate(17.57 71.22) rotate(-170.0)" d="M0,0 Q10.07,-2.32 14.64,-2.90 Q18.30,-2.90 18.30,0 Q18.30,2.90 14.64,2.90 Q10.07,2.32 0,0 Z"/><path transform="translate(18.10 69.75) rotate(-150.0)" d="M0,0 Q10.07,-2.32 14.64,-2.90 Q18.30,-2.90 18.30,0 Q18.30,2.90 14.64,2.90 Q10.07,2.32 0,0 Z"/><path transform="translate(19.11 68.55) rotate(-130.0)" d="M0,0 Q10.07,-2.32 14.64,-2.90 Q18.30,-2.90 18.30,0 Q18.30,2.90 14.64,2.90 Q10.07,2.32 0,0 Z"/><path transform="translate(20.46 67.77) rotate(-110.0)" d="M0,0 Q10.07,-2.32 14.64,-2.90 Q18.30,-2.90 18.30,0 Q18.30,2.90 14.64,2.90 Q10.07,2.32 0,0 Z"/><path transform="translate(22.00 67.50) rotate(-90.0)" d="M0,0 Q10.07,-2.32 14.64,-2.90 Q18.30,-2.90 18.30,0 Q18.30,2.90 14.64,2.90 Q10.07,2.32 0,0 Z"/><path transform="translate(23.54 67.77) rotate(-70.0)" d="M0,0 Q10.07,-2.32 14.64,-2.90 Q18.30,-2.90 18.30,0 Q18.30,2.90 14.64,2.90 Q10.07,2.32 0,0 Z"/><path transform="translate(24.89 68.55) rotate(-50.0)" d="M0,0 Q10.07,-2.32 14.64,-2.90 Q18.30,-2.90 18.30,0 Q18.30,2.90 14.64,2.90 Q10.07,2.32 0,0 Z"/><path transform="translate(25.90 69.75) rotate(-30.0)" d="M0,0 Q10.07,-2.32 14.64,-2.90 Q18.30,-2.90 18.30,0 Q18.30,2.90 14.64,2.90 Q10.07,2.32 0,0 Z"/><path transform="translate(26.43 71.22) rotate(-10.0)" d="M0,0 Q10.07,-2.32 14.64,-2.90 Q18.30,-2.90 18.30,0 Q18.30,2.90 14.64,2.90 Q10.07,2.32 0,0 Z"/><path transform="translate(17.57 -24.78) rotate(-170.0)" d="M0,0 Q10.07,-2.32 14.64,-2.90 Q18.30,-2.90 18.30,0 Q18.30,2.90 14.64,2.90 Q10.07,2.32 0,0 Z"/><path transform="translate(18.10 -26.25) rotate(-150.0)" d="M0,0 Q10.07,-2.32 14.64,-2.90 Q18.30,-2.90 18.30,0 Q18.30,2.90 14.64,2.90 Q10.07,2.32 0,0 Z"/><path transform="translate(19.11 -27.45) rotate(-130.0)" d="M0,0 Q10.07,-2.32 14.64,-2.90 Q18.30,-2.90 18.30,0 Q18.30,2.90 14.64,2.90 Q10.07,2.32 0,0 Z"/><path transform="translate(20.46 -28.23) rotate(-110.0)" d="M0,0 Q10.07,-2.32 14.64,-2.90 Q18.30,-2.90 18.30,0 Q18.30,2.90 14.64,2.90 Q10.07,2.32 0,0 Z"/><path transform="translate(22.00 -28.50) rotate(-90.0)" d="M0,0 Q10.07,-2.32 14.64,-2.90 Q18.30,-2.90 18.30,0 Q18.30,2.90 14.64,2.90 Q10.07,2.32 0,0 Z"/><path transform="translate(23.54 -28.23) rotate(-70.0)" d="M0,0 Q10.07,-2.32 14.64,-2.90 Q18.30,-2.90 18.30,0 Q18.30,2.90 14.64,2.90 Q10.07,2.32 0,0 Z"/><path transform="translate(24.89 -27.45) rotate(-50.0)" d="M0,0 Q10.07,-2.32 14.64,-2.90 Q18.30,-2.90 18.30,0 Q18.30,2.90 14.64,2.90 Q10.07,2.32 0,0 Z"/><path transform="translate(25.90 -26.25) rotate(-30.0)" d="M0,0 Q10.07,-2.32 14.64,-2.90 Q18.30,-2.90 18.30,0 Q18.30,2.90 14.64,2.90 Q10.07,2.32 0,0 Z"/><path transform="translate(26.43 -24.78) rotate(-10.0)" d="M0,0 Q10.07,-2.32 14.64,-2.90 Q18.30,-2.90 18.30,0 Q18.30,2.90 14.64,2.90 Q10.07,2.32 0,0 Z"/><ellipse cx="22" cy="28.5" rx="3.2" ry="1.8"/><ellipse cx="0" cy="4.5" rx="3.2" ry="1.8"/><ellipse cx="44" cy="4.5" rx="3.2" ry="1.8"/><ellipse cx="0" cy="52.5" rx="3.2" ry="1.8"/></g></pattern>
<mask id="mFan" maskUnits="userSpaceOnUse" x="470" y="250" width="120" height="160"><rect x="470" y="250" width="120" height="160" fill="url(#pFan)"/></mask>
<mask id="mFanB" maskUnits="userSpaceOnUse" x="470" y="250" width="120" height="160"><rect x="470" y="250" width="120" height="160" fill="url(#pFanB)"/></mask>
<filter id="bl" x="-10%" y="-10%" width="120%" height="120%"><feGaussianBlur stdDeviation="1.2"/></filter>
<clipPath id="cA"><path d="M243,294 L235,310.5 L221.5,309.5 L217.5,319.5 L209.6,341 L206.7,354.7 L209.6,368.4 L217.5,384 L217.3,391.8 L219.2,399.6 L233,406.5 L258.4,410.4 L282,410.4 L301.6,405.5 L317.3,393.7 L331,382 L339,364.5 L342,341 L341,321.4 L335,307.6 L325.3,297.8 L319.4,292 Z"/></clipPath><clipPath id="cB"><path d="M253.5,207.8 L256.5,221.6 L260.4,233.3 L257.5,255 L249.6,282.4 L239.8,305.9 L243,330 L262,345 L300,340 L316.3,305.9 L317.3,286.3 L322,264.7 L328,245 L335.9,225.5 L330,200 L300,195 L270,200 Z"/></clipPath><clipPath id="cC"><path d="M253.5,209.3 L255.5,183.8 L259.4,164.2 L265.3,153.4 L275,150.5 L281,149.5 L283,144.6 L288.8,138.7 L304.5,133.8 L324,131.5 L332,134.8 L336.9,142.6 L339.8,140.3 L349.6,142.6 L357.5,152.5 L361.8,164.2 L363,176 L362.4,183.8 L350,215 L316,207 L300,209 L285,215 L270,222 L258,222 Z"/></clipPath><clipPath id="cD"><path d="M318,180 Q326,166 340,164 L362,176 L365.3,185.8 L374,190.7 L381,199.5 L379,203.4 L386.9,217 L396.7,229.4 L406.5,249 L415.3,262.7 L416.3,272.5 L412.4,282.4 L404.5,286.3 L394.7,291.2 L386.9,288.2 L375,276.5 L365.3,258.8 L347.6,237.3 L336,225.5 L324,206 L317,190 Z"/></clipPath>
<clipPath id="cR2"><path d="M1024,129.3 L998,151.7 L984,172.4 L956.6,200 L918.6,234.5 L887.6,255 L873.8,267 L873,272.4 L876.6,282.8 L884.5,287 L899.5,282.5 L930.5,256.5 L965,225.5 L996,201.5 L1012.5,194.5 L1024,181 Z"/></clipPath>
</defs>
<rect x="141" y="103.5" width="481" height="430" fill="url(#gL)"/>
<g clip-path="url(#cpL)">
<!-- ===== black base ===== -->
<g fill="#020202">
<path d="M216,398 L310,398 L310.5,457 L322.5,464 L322.5,470.5 L268,488 L262,487.5 L212,465.5 L210.5,460.5 L214.5,455 L215,431 Z"/>
<path d="M191,428.5 L193.5,426 L205,431 L215.5,431.5 L215.5,447 L206,445.5 L204,437.5 L192.5,432 Z"/>
</g>
<!-- ===== yellow robot ===== -->
<g id="robotL">
<!-- lower body -->
<path fill="#d4d400" d="M243,294 L235,310.5 L221.5,309.5 L217.5,319.5 L209.6,341 L206.7,354.7 L209.6,368.4 L217.5,384 L217.3,391.8 L219.2,399.6 L233,406.5 L258.4,410.4 L282,410.4 L301.6,405.5 L317.3,393.7 L331,382 L339,364.5 L342,341 L341,321.4 L335,307.6 L325.3,297.8 L319.4,292 Z"/>
<g clip-path="url(#cA)"><g filter="url(#bl)">
<path fill="#c6c600" d="M221.5,309.8 Q212,328 208.5,345 Q206,360 211,372 Q216,383 220,388 Q233,372 237,350 Q238,326 232,311 Z"/>
<path fill="#dcdc00" d="M232,311 Q239,328 237,352 Q233,374 220,388 L222,398 L232,402 Q247,380 251,352 Q252,326 246,308 L235,310.5 Z"/>
<path fill="#d0d000" d="M246,308 Q253,328 251,352 Q247,380 232,402 L240,406 Q256,380 259,350 Q259,322 252,300 Z"/>
<path fill="#c6c600" d="M276,292 L311.5,291 L312,318 L309.6,341 L272,349 L266,330 Z"/>
<path fill="#cfcf00" d="M309.6,341 L272,349 L262,362 L286,358 L312,352 Z"/>
<path fill="#dcdc00" d="M247,372 L284,358.6 L300,365 L307.6,372 L307.6,388 L298,402 L262,408.5 L254.7,396 Z"/>
<path fill="#c8c800" d="M284,358.6 L300,365 L307.6,372 L302,378 L296,370 Z"/>
<path fill="#d2d200" d="M254.7,396 L262,408.5 L298,402 L307.6,388 L290,396 Z"/>
<path fill="#d6d600" d="M319.4,292 L325.3,297.8 L335,307.6 L341,321.4 L342,341 L339,364.5 L331,382 L315.5,396 Q327,374 329.5,346 Q330,316 318,297 Z"/>
<path fill="#c0c000" d="M309.6,336 L335,330 L335,345 L312,353 Z"/>
<path fill="#c8c800" d="M331,349 Q332,330 327,310 L321,300 Q329,320 329.5,346 Q327,374 315.5,396 L322,390 Q330,370 331,349 Z"/>
<path fill="#c2c200" d="M217,392 L233,406.5 L258.4,410.4 L282,410.4 L301.6,405.5 L317.3,393.7 L300,401 L262,406 L232,401 Z"/>
</g></g>
<!-- lower arm link2 -->
<path fill="#d3d300" d="M253.5,207.8 L256.5,221.6 L260.4,233.3 L257.5,255 L249.6,282.4 L239.8,305.9 L243,330 L262,345 L300,340 L316.3,305.9 L317.3,286.3 L322,264.7 L328,245 L335.9,225.5 L330,200 L300,195 L270,200 Z"/>
<g clip-path="url(#cB)"><g filter="url(#bl)">
<path fill="#c9c900" d="M297.6,229 Q306,240 308,262 Q306,290 300,320 L290,338 L270,342 Q286,300 290,262 Q292,240 287,222 Z"/>
<path fill="#dede00" d="M260.4,233.3 L257.5,255 L249.6,282.4 L239.8,305.9 L243,325 Q262,280 268,245 L264,232 Z"/>
<path fill="#dada00" d="M310,262 L322,264.7 L317.3,286.3 L316.3,305.9 L306,326 Q310,290 310,262 Z"/>
</g></g>
<!-- upper housing J3 -->
<path fill="#d7d700" d="M253.5,209.3 L255.5,183.8 L259.4,164.2 L265.3,153.4 L275,150.5 L281,149.5 L283,144.6 L288.8,138.7 L304.5,133.8 L324,131.5 L332,134.8 L336.9,142.6 L339.8,140.3 L349.6,142.6 L357.5,152.5 L361.8,164.2 L363,176 L362.4,183.8 L350,215 L316,207 L300,209 L285,215 L270,222 L258,222 Z"/>
<g clip-path="url(#cC)"><g filter="url(#bl)">
<path fill="#c8c800" d="M265.3,153.4 Q258,168 255.5,186 Q253,205 256,217 Q262,222 268,218 Q277,200 278,180 Q279,162 274,151 Z"/>
<path fill="#e0e000" d="M274,151 Q280,163 279,181 Q277,202 268,218 L276,219 Q288,200 289,178 Q289,160 283,148 Z"/>
<path fill="#cdcd00" d="M339.8,140.3 L349.6,142.6 L357.5,152.5 L361.8,164.2 L363,176 L362.4,183.8 L352,180 Q350,160 340,148 Z"/>
<path fill="#c0c000" d="M289,178 L318,180 L317,190 L324,206 L316,207 L300,209 L285,215 Q289,196 289,178 Z"/>
<path fill="#dede00" d="M290,140 L322,133 L333,137 L338,146 L318,156 L296,158 Z"/>
</g></g>
<path fill="none" stroke="#b4b400" stroke-width="0.6" d="M311,143 L328,140.5 L334,148 L332,152.5 L317,154 Z"/>
<!-- triangular hole -> background -->
<path fill="#f0f0f0" d="M285.5,214.7 L300,209 L315.3,205.9 Q311,221 297.8,229 Q290,224 285.5,214.7 Z"/>
<!-- forearm -->
<path fill="#d3d300" d="M318,180 Q326,166 340,164 L362,176 L365.3,185.8 L374,190.7 L381,199.5 L379,203.4 L386.9,217 L396.7,229.4 L406.5,249 L415.3,262.7 L416.3,272.5 L412.4,282.4 L404.5,286.3 L394.7,291.2 L386.9,288.2 L375,276.5 L365.3,258.8 L347.6,237.3 L336,225.5 L324,206 L317,190 Z"/>
<g clip-path="url(#cD)"><g filter="url(#bl)">
<path fill="#dddd00" d="M340,164 L362,176 L366,186 L396.7,229.4 L406.5,249 L415.3,262.7 L404,268 L372,222 L350,188 Z"/>
<path fill="#c2c200" d="M372,250 L386,242 L396,256 L382,266 Z"/>
<path fill="#c6c600" d="M374,190.7 L381,199.5 L379,203.4 L371,197 Z"/>
<path fill="#c8c800" d="M317,190 L324,206 L336,225.5 L347.6,237.3 L365.3,258.8 L375,276.5 L386.9,288.2 L394.7,291.2 L392,284 L372,262 L350,232 L330,206 L322,186 Z"/>
<path fill="#e0d800" d="M404.5,286.3 L412.4,282.4 L416.3,272.5 L415.3,262.7 L404,268 Z"/>
</g></g>
</g>

<!-- ===== left tool (gray) ===== -->
<g id="toolL" stroke="#2e2e36" stroke-width="0.5">
<path fill="#a0a0b0" d="M408.5,286 L419,269.5 L442,269.5 L442,287 L415,289.5 Z"/>
<path fill="#a9a9ba" stroke-width="0.4" d="M419,272 L438,272 L438,284 L421,285 Z"/>
<path fill="#7c7c8a" d="M408.5,286 L413,275 L419,269.5 L415,289.5 Z"/>
<rect x="428.3" y="249.5" width="6" height="19.5" fill="#b2b2c4"/>
<ellipse cx="431.3" cy="249.5" rx="3" ry="1.2" fill="#55555f"/>
<rect x="437.5" y="234" width="12" height="9" fill="#5a5a66"/>
<rect x="438" y="243" width="11.5" height="26" fill="#9595a5"/>
<rect x="441.5" y="269" width="6" height="18" fill="#80808e"/>
<path fill="#55555f" d="M424,240 L428,239 L429,242.5 L425,243.5 Z"/>
<path fill="none" d="M428.5,241 L437.5,238.5"/>
<rect x="456.2" y="180" width="3.6" height="45" fill="#a3a3b4" stroke-width="0.45"/>
<rect x="452" y="224.5" width="11.5" height="9" fill="#4a4a54"/>
<rect x="449.5" y="233.5" width="16" height="45.5" fill="#9b9bab"/>
<rect x="451" y="238" width="13" height="10" fill="#a5a5b6" stroke-width="0.3"/>
<rect x="450" y="252" width="15" height="1.4" fill="#3b7fd0" stroke="none"/>
<rect x="456" y="255" width="9" height="20" fill="#9d9dae" stroke-width="0.3"/>
<rect x="452.5" y="279" width="8.5" height="11" fill="#9898a8"/>
<path fill="#b0b0c0" d="M454,290 L459.5,290 L458.5,298 L457,303.5 L455.5,298 Z"/>
</g>
<!-- ===== left positioner (orange) ===== -->
<g id="posL" stroke="#4a2000" stroke-width="0.45" stroke-linejoin="round">
<!-- back beam + far inner wall -->
<path fill="#bf5609" d="M470,388 L548,420 L552,470 L500,480 L468,440 Z"/>
<!-- motor box left -->
<path fill="#c3590a" d="M431.4,380.4 L458.6,391.3 L458.6,444 L452.2,440.3 L431.4,404 Z"/>
<path fill="#cd5f0c" d="M431.4,380.4 L441.3,366.8 L469.5,375.9 L458.6,391.3 Z"/>
<path fill="#d5660f" d="M441.3,366.8 L458.6,361.4 L478.5,369.5 L469.5,375.9 Z"/>
<!-- left ring housing -->
<path fill="#c65a0a" d="M458.6,391.3 L469.5,375.9 L478.5,369.5 Q492,376 494,392 Q494,412 480,424 L470,430 L458.6,420 Z"/>
<path fill="none" d="M462,398 Q464,382 476,374"/>
<path fill="none" d="M466,402 Q467,388 479,379"/>
<!-- right housing -->
<path fill="#cd5f0c" d="M556,430 Q562,416 576,411.5 Q588,411.5 593,418 L598,423.3 Q606,427 607.7,447 L571.4,451.6 L557,444 Z"/>
<path fill="#b45208" d="M557,444 L571.4,451.6 L571.4,492.9 L557.7,508.2 Z"/>
<path fill="#c3590a" d="M571.4,492.9 L571.4,451.6 Q572,436 580,428 Q588.4,422 597.8,423.3 Q606,428 607.7,446.9 L607.7,485.8 Z"/>
<path fill="#a84b07" d="M571.4,492.9 L607.7,485.8 L602.5,495.3 L558.5,508.5 Z"/>
<path fill="#c3590a" d="M588.4,502.3 L602.5,495.3 L604.9,497.6 L604.9,500 L590.8,505.8 Z"/>
<!-- cradle U: front frame -->
<path fill="#c85c0b" d="M457.7,401.7 L468.5,405 L468.5,429 Q474,456 492,471 Q512,484 532,480.5 Q545,476 547.4,466 L547.4,440 Q549,430 556,428 L571,450 L571.1,495.3 L558.4,509.3 L557.1,514.4 L543.2,519.4 L531.7,515.6 L531.7,511.8 L469.5,481.3 L459.3,485.1 L447.9,480.8 L447.9,476.2 L457.7,472.4 Z"/>
<path fill="none" stroke="#4a2000" stroke-width="0.4" d="M548.3,440 Q551,422 563,414.5 Q572,410.5 582,411.5"/>
<path fill="none" stroke="#ececec" stroke-width="1.5" d="M555.6,444 Q556.5,425 574.5,415.5"/>
<path fill="none" stroke="#4a2000" stroke-width="0.35" d="M557,444 Q558,427 575.5,417"/>
<!-- cradle inner floor -->
<path fill="#d2650f" d="M468.5,429 Q474,456 492,471 Q512,484 532,480.5 Q545,476 547.4,466 L521,452 L486,464 Z"/>
<path fill="#c45a0a" d="M468.5,429 L470,410 L500,422 L503,450 L486,464 Z"/>
<path fill="#b85308" d="M521,452 L547.4,441 L547.4,466 Z"/>
<!-- hanging plate -->
<path fill="#c0570a" d="M502,414 L502,452 L526,464 L537,441 L537,428 Z"/>
<!-- upper beam -->
<path fill="#cc5e0c" d="M480,398 L548,424 L548,434 L480,408 Z"/>
<!-- gray bearing -->
<path fill="#b45208" d="M468.5,405 L470,396 L500,408 L502,422 L486,424 Z"/>
<path fill="none" stroke="#2a2a2c" stroke-width="3.6" d="M469.5,396 Q471,411 487,419.5"/>
<path fill="none" stroke="#8d8e94" stroke-width="2.4" d="M469.5,396 Q471,411 487,419.5"/>
<path fill="none" stroke="#d8d8dc" stroke-width="0.8" stroke-dasharray="1.2 1.6" d="M471.5,398 Q473,410 487,417.5"/>
<path fill="#c3590a" d="M478,410 L494,416 L494,424 L480,420 Z"/>
<!-- feet -->
<path fill="#c3590a" d="M447.9,476.2 L458,472.4 L469.5,477.5 L469.5,481.3 L459.3,485.1 L447.9,480.8 Z"/>
<path fill="#cb5d0b" d="M447.9,476.2 L458,472.4 L469.5,477.5 L459.3,481.5 Z"/>
<path fill="#c3590a" d="M531.7,511.8 L544.4,506.7 L557.1,510.5 L557.1,514.4 L543.2,519.4 L531.7,515.6 Z"/>
<path fill="#cb5d0b" d="M531.7,511.8 L544.4,506.7 L557.1,510.5 L543.2,515.5 Z"/>
</g>
<!-- ===== turntable ===== -->
<g id="tableL">
<path fill="#4c4e52" stroke="#222" stroke-width="0.4" d="M470.6,388.3 A58,16.7 0 0 0 586.6,388.3 L586.6,394.5 A58,16.7 0 0 1 470.6,394.5 Z"/>
<ellipse cx="528.6" cy="388.3" rx="58" ry="16.7" fill="#6e7074" stroke="#2a2a2c" stroke-width="0.5"/>
<path fill="none" stroke="#3a3b3e" stroke-width="0.5" d="M478,380 L500,384 M476,396 L492,392 M512,404.5 L518,399 M560,402 L552,397 M580,392 L566,389"/>
<ellipse cx="529" cy="385.5" rx="36" ry="10.5" fill="#5d5f63"/>
<ellipse cx="574.5" cy="399" rx="2" ry="2.6" fill="none" stroke="#ececec" stroke-width="0.9"/>
<ellipse cx="481.5" cy="366" rx="1.8" ry="2.6" fill="none" stroke="#ececec" stroke-width="0.9"/>
</g>
<!-- ===== cylinder lamp ===== -->
<g id="lampL">
<!-- back wall (inside) -->
<path fill="#5f5310" fill-opacity="0.9" mask="url(#mFanB)" d="M484,277.5 A45,15.5 0 0 1 574,277.5 L574,385.5 A45,15.5 0 0 1 484,385.5 Z"/>
<!-- front wall -->
<path fill="#86741a" mask="url(#mFan)" d="M484,285 A45,15.5 0 0 0 574,285 L574,385.5 A45,15.5 0 0 1 484,385.5 Z"/>
<path fill="url(#pOut)" d="M484,285 A45,15.5 0 0 0 574,285 L574,385.5 A45,15.5 0 0 1 484,385.5 Z"/>
<path fill="none" stroke="#1c1800" stroke-width="0.7" d="M484,277.5 L484,385.5 A45,15.5 0 0 0 574,385.5 L574,277.5"/>
<!-- bottom band -->
<path fill="#8a7819" stroke="#1c1800" stroke-width="0.4" d="M484,378.5 A45,15.5 0 0 0 574,378.5 L574,385.5 A45,15.5 0 0 1 484,385.5 Z"/>
<!-- top band back (inner face) -->
<path fill="#7a6a14" stroke="#1c1800" stroke-width="0.4" d="M484,277.5 A45,15.5 0 0 1 574,277.5 L574,285 A45,15.5 0 0 0 484,285 Z"/>
<!-- top band front -->
<path fill="#8f7d1b" stroke="#1c1800" stroke-width="0.5" d="M484,277.5 A45,15.5 0 0 0 574,277.5 L574,285.5 A45,15.5 0 0 1 484,285.5 Z"/>
<path fill="none" stroke="#1c1800" stroke-width="0.5" d="M561.5,266 L561.5,399 M546,291 L546,401"/>
</g>
</g>
<rect x="620" y="103" width="404" height="437" fill="#c9cacb"/>
<rect x="621" y="103.5" width="2.2" height="436" fill="#d6d7d8"/>
<rect x="623" y="104.5" width="401" height="434.5" fill="url(#gR)"/>

<g clip-path="url(#cpR)">
<!-- ===== right arm ===== -->
<g id="armR">
<path fill="#d6d600" d="M1024,129.3 L998,151.7 L984,172.4 L956.6,200 L918.6,234.5 L887.6,255 L873.8,267 L873,272.4 L876.6,282.8 L884.5,287 L899.5,282.5 L930.5,256.5 L965,225.5 L996,201.5 L1012.5,194.5 L1024,181 Z"/>
<g clip-path="url(#cR2)"><g filter="url(#bl)">
<path fill="#c6c600" d="M884.5,287 L899.5,282.5 L930.5,256.5 L965,225.5 L996,201.5 L1012.5,194.5 L1024,181 L1024,168 L1006,182 L990,190 L958,216 L925,246 L895,270 L880,276 Z"/>
<path fill="#e0e000" d="M1024,129.3 L998,151.7 L984,172.4 L956.6,200 L918.6,234.5 L887.6,255 L873.8,267 L880,266 L921,240 L960,206 L988,178 L1002,158 L1024,140 Z"/>
<path fill="#cccc00" d="M927,230 L962,200 L984,186 L992,196 L968,212 L938,240 Z"/>
</g></g>
<path fill="none" stroke="#b4b400" stroke-width="0.5" d="M1006,154 L1012,150 L1016,156 L1010,160 Z"/>
<path fill="none" stroke="#bcbc00" stroke-width="0.4" d="M927,230 L962,200 L984,186 L992,196 L968,212 L938,240 Z"/>
</g>
<!-- ===== right tool ===== -->
<g id="toolR" stroke="#2e2e36" stroke-width="0.5">
<path fill="#8a8a98" d="M867,275 L876,270 L879,281 L870,288 Z"/>
<rect x="825.5" y="274" width="43.5" height="19.5" fill="#a0a0b0"/>
<rect x="835" y="277" width="26" height="14" fill="#a9a9ba" stroke-width="0.4"/>
<rect x="825.5" y="276" width="6" height="20" fill="#787884"/>
<rect x="842" y="254.5" width="6.6" height="19.5" fill="#b2b2c4"/>
<rect x="840" y="252.5" width="10.5" height="2.6" fill="#4a4a54"/>
<rect x="825.3" y="240.4" width="12" height="7" fill="#5a5a66"/>
<rect x="826" y="247.4" width="10.5" height="15" fill="#8e8e9c"/>
<rect x="826.5" y="262.4" width="9" height="11.6" fill="#a0a0b0"/>
<path fill="none" d="M837.3,245 L847,244.8 M837.3,253 L846,253"/>
<rect x="847" y="242.7" width="6.5" height="4" fill="#4a4a54"/>
<rect x="847" y="251" width="6.5" height="4" fill="#4a4a54"/>
<rect x="808.7" y="185.5" width="5" height="50" fill="#a3a3b4" stroke-width="0.45"/>
<rect x="805" y="235" width="12.5" height="7" fill="#5a5a66"/>
<rect x="804.2" y="242" width="13.5" height="58" fill="#9090a0"/>
<rect x="806" y="248" width="10" height="9" fill="#a5a5b6" stroke-width="0.3"/>
<rect x="806" y="262" width="10" height="8" fill="#9a9aac" stroke-width="0.3"/>
<rect x="806" y="273.5" width="10" height="1.4" fill="#3b7fd0" stroke="none"/>
<rect x="806" y="278" width="10" height="10" fill="#55555f" stroke-width="0.3"/>
<rect x="817.7" y="275" width="8" height="18" fill="#7e7e8a"/>
<rect x="806.5" y="300" width="8.5" height="10" fill="#9898a8"/>
<path fill="#b0b0c0" d="M808,310 L813.5,310 L812.5,317 L810.8,323 L809.2,317 Z"/>
</g>
<!-- ===== right positioner ===== -->
<g id="posR" stroke="#4a2000" stroke-width="0.45" stroke-linejoin="round">
<!-- back ring -->
<path fill="#c65a0a" d="M748,406 L749,384 L754,374 L765.6,364.4 L775.8,364.4 L786,373 L797,386 L797,402 L760,412 Z"/>
<path fill="#5e3410" stroke="none" d="M754,403 L755,386 L759,378 L767,371 L775,370.5 L782,377 L772,390 L760,405 Z"/>
<path fill="#c85c0b" d="M760,401 L762,388 L768,380 L776,376.5 L783,384 L774,398 Z"/>
<path fill="#d9d9dc" stroke="#555" stroke-width="0.3" d="M786,381 L789.6,386.2 L793.2,394.2 L784.5,392.7 L780.9,386.2 Z"/>
<!-- left box -->
<path fill="#c3590a" d="M734.4,419 L762,393 L764,395 L764,420 L754,447 L737,426 Z"/>
<path fill="#d5660f" d="M734.4,419 L762,393 L764,395 L738,422 Z"/>
<!-- main body -->
<path fill="#c0570a" d="M753.3,505 L753.3,424 Q754,400 785,397.3 Q817,399 818.2,427 L818.2,505 Z"/>
<path fill="none" stroke="#ececec" stroke-width="1.3" d="M757.5,425 Q759,404 785,401 Q797,401 806,406"/>
<path fill="#c55b0b" d="M760.6,499 L760.6,428 Q762,407 786,406 Q811,407 812,430 L812,499 Z"/>
<path fill="#b95409" d="M760.6,479.4 L812,479.4 L812,499 L760.6,499 Z"/>
<!-- ears/feet -->
<path fill="#c3590a" d="M735,473.5 L748.4,473.5 L753,476 L753,482 L735,482 Z"/>
<path fill="#c3590a" d="M818,473.5 L823.8,473.5 L823.8,482 L818,482 Z"/>
<path fill="#c3590a" d="M739.8,497 L753.3,495 L753.3,505 L818.2,505 L818.2,496 L829.2,497.5 L829.2,505 L820,506.5 L750,506.5 L739.8,505 Z"/>
</g>
<!-- ===== dome ===== -->
<g id="dome" stroke="#2a2c36" stroke-width="0.5" stroke-linejoin="round">
<path fill="#7d839b" fill-opacity="0.42" d="M766.3,337.9 Q783,328 806.6,323.3 Q820,324 832.8,329.2 L852.4,341 L865.5,360.8 L869.8,380.4 L867.6,402 L859,419.6 L850,428 L845.9,421.8 Z"/>
<!-- dense curved side -->
<path fill="#666c82" fill-opacity="0.9" stroke="none" d="M832.8,329.2 L852.4,341 L865.5,360.8 L869.8,380.4 L867.6,402 L859,419.6 L850,428 L846,422 Q858,408 860,390 Q861,368 850,350 Q842,338 826,331 Z"/>
<!-- top rim band -->
<path fill="#6a7086" fill-opacity="0.9" stroke="none" d="M766.3,337.9 Q783,328 806.6,323.3 Q820,324 832.8,329.2 L840,334 L834,339 Q820,331 806,330.5 Q790,333 776,341 Z"/>
<g fill="#d9d9db" stroke="none"><circle cx="781" cy="335.5" r="1.1"/><circle cx="788" cy="332.6" r="1.1"/><circle cx="795" cy="330.4" r="1.1"/><circle cx="802" cy="328.8" r="1.1"/><circle cx="809" cy="328.2" r="1.1"/><circle cx="816" cy="328.8" r="1.1"/><circle cx="823" cy="330.6" r="1.1"/><circle cx="830" cy="333.4" r="1.1"/>
<circle cx="853" cy="350" r="1.2"/><circle cx="858" cy="359" r="1.2"/><circle cx="862" cy="369" r="1.2"/><circle cx="864" cy="380" r="1.2"/><circle cx="864" cy="391" r="1.2"/><circle cx="862" cy="402" r="1.2"/><circle cx="858" cy="412" r="1.2"/><circle cx="853" cy="420" r="1.1"/></g>
<!-- ferns -->
<g fill="#535970" stroke="#2f3342" stroke-width="0.3">
<path d="M796.1,354.8 L794.3,351.1 L799.8,353.0 L798.3,349.6 L803.5,351.3 L802.3,348.1 L807.2,349.5 L806.3,346.6 L810.9,347.7 L810.3,345.1 L814.7,346.0 L814.3,343.6 L818.4,344.2 L818.3,342.1 L822.1,342.4 L822.3,340.6 L825.8,340.7 L826.3,339.1 L829.5,338.9 L830.3,337.6 L833.2,337.1 L832.3,336.8 L832.0,336.0 L831.7,335.2 L832.2,334.3 L829.7,335.9 L828.2,335.4 L825.7,337.4 L824.3,336.6 L821.7,338.9 L820.3,337.7 L817.7,340.4 L816.3,338.8 L813.7,341.9 L812.4,339.9 L809.7,343.4 L808.4,341.0 L805.7,344.9 L804.5,342.1 L801.7,346.4 L800.5,343.2 L797.7,347.9 L796.5,344.3 L793.7,349.4 L792.6,345.4 Z"/>
<path d="M830.4,390.1 L822.6,384.9 L833.6,386.2 L826.6,381.3 L836.7,382.2 L830.6,377.7 L839.9,378.3 L834.6,374.1 L843.1,374.4 L838.6,370.5 L846.2,370.5 L842.6,366.9 L849.4,366.5 L846.6,363.3 L852.6,362.6 L850.6,359.7 L855.7,358.7 L854.6,356.1 L858.9,354.7 L858.6,352.5 L862.1,350.8 L860.6,350.7 L860.0,350.0 L859.4,349.3 L859.4,347.8 L857.4,351.1 L855.2,350.6 L853.4,354.7 L850.9,353.3 L849.4,358.3 L846.7,356.1 L845.4,361.9 L842.5,358.8 L841.4,365.5 L838.2,361.5 L837.4,369.1 L834.0,364.3 L833.4,372.7 L829.7,367.0 L829.4,376.3 L825.5,369.7 L825.4,379.9 L821.3,372.5 L821.4,383.5 L817.0,375.2 Z"/>
<path d="M844.4,409.0 L838.6,404.8 L847.5,404.9 L842.4,401.0 L850.6,400.9 L846.3,397.3 L853.7,396.9 L850.2,393.5 L856.8,392.9 L854.1,389.8 L859.9,388.8 L857.9,386.0 L862.9,384.8 L861.8,382.3 L866.0,380.8 L865.7,378.5 L869.1,376.7 L867.6,376.6 L867.0,376.0 L866.4,375.4 L866.3,373.9 L864.4,377.2 L862.2,376.8 L860.6,381.0 L858.1,379.8 L856.7,384.7 L853.9,382.7 L852.8,388.5 L849.8,385.7 L848.9,392.2 L845.7,388.6 L845.1,396.0 L841.6,391.6 L841.2,399.7 L837.4,394.5 L837.3,403.5 L833.3,397.5 Z"/>
<path d="M851.5,426.8 L847.5,423.6 L854.3,422.6 L851.2,419.6 L857.2,418.4 L854.8,415.6 L860.0,414.2 L858.5,411.6 L862.9,409.9 L862.2,407.6 L865.8,405.7 L865.8,403.6 L868.6,401.5 L867.7,401.6 L867.0,401.0 L866.3,400.4 L866.4,399.4 L864.5,402.4 L862.4,402.7 L860.8,406.4 L858.5,405.9 L857.2,410.4 L854.5,409.1 L853.5,414.4 L850.5,412.3 L849.8,418.4 L846.6,415.5 L846.2,422.4 L842.6,418.7 Z"/>
<path d="M810.2,367.4 L808.2,365.0 L812.8,364.0 L811.4,361.8 L815.4,360.6 L814.6,358.6 L817.9,357.2 L817.8,355.4 L820.5,353.8 L821.0,352.2 L823.1,350.4 L822.6,350.6 L822.0,350.0 L821.4,349.4 L821.6,348.9 L819.8,351.0 L818.2,351.5 L816.6,354.2 L814.8,354.1 L813.4,357.4 L811.4,356.6 L810.2,360.6 L808.0,359.2 L807.0,363.8 L804.6,361.8 Z"/>
<path d="M815.1,348.2 L814.6,345.6 L819.1,345.6 L818.9,343.3 L823.0,343.0 L823.3,341.0 L827.0,340.4 L827.6,338.6 L831.0,337.8 L831.9,336.3 L834.9,335.2 L836.3,334.0 L838.9,332.6 L838.4,332.8 L838.0,332.0 L837.6,331.2 L838.0,330.9 L835.4,332.4 L833.6,332.8 L831.1,334.7 L829.3,334.7 L826.7,337.0 L824.9,336.5 L822.4,339.4 L820.6,338.4 L818.1,341.7 L816.2,340.3 L813.7,344.0 L811.9,342.2 Z"/>
<path d="M830.2,399.4 L828.4,396.9 L832.9,395.6 L831.9,393.4 L835.7,391.9 L835.4,389.9 L838.4,388.1 L838.9,386.4 L841.1,384.4 L840.6,384.6 L840.0,384.0 L839.4,383.4 L839.6,382.9 L837.6,385.1 L835.9,385.6 L834.1,388.6 L832.1,388.3 L830.6,392.1 L828.4,391.1 L827.1,395.6 L824.6,393.8 Z"/>
</g>
<path fill="none" stroke="#2a2c36" stroke-width="0.7" d="M766.3,337.9 Q783,328 806.6,323.3 Q820,324 832.8,329.2 L852.4,341 L865.5,360.8 L869.8,380.4 L867.6,402 L859,419.6 L850,428"/>
<!-- flat plate -->
<path fill="#555a6c" d="M762.6,342.2 L766.3,337.9 L845.9,421.8 L839.3,428.3 L762.6,345.5 Z"/>
<path fill="#a2a8c0" d="M766.3,337.9 L774,336.8 L852.4,417.4 L845.9,421.8 Z"/>
<path fill="#a2a8c0" d="M786,351.5 L806,341 L808.5,344 L789,354.5 Z"/>
<path fill="#a2a8c0" d="M824,391 L852,374 L854,377.5 L827,394 Z"/>
</g>
</g>
<!-- ===== triads ===== -->
<g id="triadL" font-family="Liberation Sans, sans-serif" font-size="9.4">
<path d="M190.8,476 L190.8,444" stroke="#2a2af0" stroke-width="1.7" fill="none"/>
<path d="M188.9,448 L190.8,440.5 L192.7,448 Z" fill="#2a2af0"/>
<path d="M190.8,476 L212,470.3" stroke="#22c02a" stroke-width="1.4" fill="none"/>
<path d="M210.6,468.2 L217.4,468.9 L211.8,472.4 Z" fill="#1a1a1a"/>
<path d="M190.8,476 L211,483.8" stroke="#f03030" stroke-width="1.4" fill="none"/>
<path d="M209.6,481.2 L216,485.6 L208.2,485.4 Z" fill="#e03030"/>
<text x="187.6" y="438.9" fill="#2a2af0">Z</text>
<text x="220.6" y="470.3" fill="#22c02a">Y</text>
<text x="216.8" y="491.6" fill="#f03030">X</text>
</g>
<g id="triadR" font-family="Liberation Sans, sans-serif" font-size="9.4">
<path d="M678.4,494.5 L678.4,459" stroke="#2a2af0" stroke-width="1.8" fill="none"/>
<path d="M676.4,462.5 L678.4,454.8 L680.4,462.5 Z" fill="#2a2af0"/>
<path d="M679,493.8 L712,493.8" stroke="#22c02a" stroke-width="1.4" fill="none"/>
<path d="M711,491.8 L718.5,493.8 L711,495.8 Z" fill="#1a1a1a"/>
<circle cx="678.5" cy="499.6" r="2" fill="#c83018"/>
<text x="675.4" y="450.3" fill="#2a2af0">Z</text>
<text x="722.6" y="498.3" fill="#22c02a">Y</text>
<text x="675.8" y="507" fill="#f03030" font-size="8">X</text>
</g>
<text x="143.2" y="531.6" font-size="9.4" fill="#111" font-family="Liberation Sans, sans-serif">1859.51mm</text>
</svg>
<svg class="a" style="left:0;top:0" width="1024" height="551" viewBox="0 0 1024 551">
<defs><linearGradient id="gBall" x1="0" y1="0" x2="0" y2="1"><stop offset="0" stop-color="#1d6f9c"/><stop offset="0.55" stop-color="#3b9ccb"/><stop offset="1" stop-color="#bfe6f5"/></linearGradient></defs>
<g transform="translate(9,27.6)"><path d="M4,3 L4,15 L12,15 M4,9 L12,9" fill="none" stroke="#e23b2e" stroke-width="1.1"/><path d="M4,0.5 L6.5,3 L4,5.5 L1.5,3 Z" fill="#f08a1c"/><rect x="11.5" y="7.5" width="3" height="3" fill="#1f8fc4"/><rect x="11.5" y="13.5" width="3" height="3" fill="#1f8fc4"/></g>
<g transform="translate(30,27.6)"><path d="M3.5,1 L11,1 L14.5,4.5 L14.5,17 L3.5,17 Z" fill="#fff" stroke="#1f8fc4" stroke-width="1.3" stroke-linejoin="round"/><path d="M11,1 L11,4.5 L14.5,4.5" fill="#d8eef8" stroke="#1f8fc4" stroke-width="0.9"/><g fill="#f08a1c"><rect x="6" y="5" width="1.3" height="3.4"/><rect x="8" y="5" width="1.3" height="3.4"/><rect x="6" y="7.6" width="3.3" height="1"/><rect x="10.2" y="5" width="2.6" height="3.6" fill="none" stroke="#f08a1c" stroke-width="1"/><rect x="6" y="10" width="2.8" height="3.6" fill="none" stroke="#f08a1c" stroke-width="1"/><rect x="10.2" y="10" width="1.2" height="4"/><rect x="10.2" y="10" width="3" height="1"/><rect x="10.2" y="11.6" width="2.4" height="0.9"/></g><path d="M10,15.8 L15.5,15.8" stroke="#e23b2e" stroke-width="1.2"/><path d="M9,15.8 L11.5,14 L11.5,17.6 Z" fill="#e23b2e"/></g>
<g transform="translate(50,27.6)"><path d="M3.5,1 L11,1 L14.5,4.5 L14.5,17 L3.5,17 Z" fill="#fff" stroke="#1f8fc4" stroke-width="1.3" stroke-linejoin="round"/><path d="M11,1 L11,4.5 L14.5,4.5" fill="#d8eef8" stroke="#1f8fc4" stroke-width="0.9"/><g fill="#f08a1c"><rect x="6" y="5" width="1.3" height="3.4"/><rect x="8" y="5" width="1.3" height="3.4"/><rect x="6" y="7.6" width="3.3" height="1"/><rect x="10.2" y="5" width="2.6" height="3.6" fill="none" stroke="#f08a1c" stroke-width="1"/><rect x="6" y="10" width="2.8" height="3.6" fill="none" stroke="#f08a1c" stroke-width="1"/><rect x="10.2" y="10" width="1.2" height="4"/><rect x="10.2" y="10" width="3" height="1"/><rect x="10.2" y="11.6" width="2.4" height="0.9"/></g><path d="M11,14.8 L14,14.8" stroke="#666" stroke-width="1"/><path d="M13.5,13 L16.5,15.5 L13.5,17.8 Z" fill="#3aa648"/></g>
<g transform="translate(69,27.6)"><path d="M3.5,1 L11,1 L14.5,4.5 L14.5,17 L3.5,17 Z" fill="#fff" stroke="#1f8fc4" stroke-width="1.3" stroke-linejoin="round"/><path d="M11,1 L11,4.5 L14.5,4.5" fill="#d8eef8" stroke="#1f8fc4" stroke-width="0.9"/><path d="M5.5,6 L12.5,6 M5.5,9 L12.5,9 M5.5,12 L10.5,12" stroke="#b0702a" stroke-width="1.1"/><path d="M11.5,13 L15.5,17 M15.5,13 L11.5,17" stroke="#e23b2e" stroke-width="1.3"/></g>
<g transform="translate(88,27.6)"><path d="M1.5,1.5 L14,1.5 L16.5,4 L16.5,16.5 L1.5,16.5 Z" fill="#1f8fc4"/><rect x="4.5" y="1.5" width="8.5" height="5.5" fill="#bfe3f3"/><rect x="10" y="2.3" width="2" height="3.8" fill="#15608f"/><rect x="4.5" y="10" width="9" height="6.5" fill="#eaf6fb"/><rect x="6" y="11.5" width="3" height="5" fill="#15608f"/></g>
<g transform="translate(111,27.6)"><path d="M1.5,1.5 L14,1.5 L16.5,4 L16.5,16.5 L1.5,16.5 Z" fill="#1f8fc4"/><rect x="4.5" y="1.5" width="8.5" height="5.5" fill="#bfe3f3"/><rect x="10" y="2.3" width="2" height="3.8" fill="#15608f"/><rect x="4.5" y="10" width="9" height="6.5" fill="#eaf6fb"/><rect x="6" y="11.5" width="3" height="5" fill="#15608f"/><path d="M11,15 L16.5,9.5 L18,11 L12.5,16.5 L10.6,17 Z" fill="#f7c520" stroke="#b8860b" stroke-width="0.4"/></g>
<g transform="translate(138,27.6)"><path d="M3.5,1 L11,1 L14.5,4.5 L14.5,17 L3.5,17 Z" fill="#fff" stroke="#1f8fc4" stroke-width="1.3" stroke-linejoin="round"/><path d="M11,1 L11,4.5 L14.5,4.5" fill="#d8eef8" stroke="#1f8fc4" stroke-width="0.9"/><path d="M9,5 L9,11.5 M9,5 L12,7.5" stroke="#1f8fc4" stroke-width="1.2" fill="none"/><circle cx="7.6" cy="12" r="1.9" fill="#1f8fc4"/><path d="M12,14 L15,16 L12,17.6 Z" fill="#3aa648"/><path d="M9,15.5 L12.5,15.5" stroke="#666" stroke-width="0.9"/></g>
<g transform="translate(167,27.6)"><circle cx="9" cy="9" r="8.4" fill="#1f8fc4"/><circle cx="9" cy="9" r="5.6" fill="#e9f5fb"/><path d="M7,5.6 L12.6,9 L7,12.4 Z" fill="#1f8fc4"/><path d="M2,6 A8,8 0 0 1 9,0.8 A9,9 0 0 0 3,8 Z" fill="#8fd0ea" opacity="0.8"/></g>
<g transform="translate(193,27.6)"><circle cx="6" cy="12.5" r="5" fill="#1f8fc4"/><circle cx="4.6" cy="11" r="2" fill="#8fd0ea"/><circle cx="12.8" cy="5" r="4.6" fill="#f08a1c"/><circle cx="12.2" cy="4.2" r="2.6" fill="#f7c520"/><path d="M6,3.5 L7.5,5.5 M5,6 L7,6.8 M13,11.5 L14.5,11.5 M12,13.5 L13.5,14.5" stroke="#e23b2e" stroke-width="1"/></g>
<g transform="translate(220,27.6)"><path d="M2,10 L11,5.5 L14,9 L14,13 L5,16.5 L2,13.5 Z" fill="#1b4f8a"/><circle cx="9.5" cy="4.5" r="2.6" fill="#123a66"/><circle cx="13.2" cy="4" r="2.2" fill="#123a66"/><path d="M1,11 L3.5,10 L3.5,14 L1,14.5 Z" fill="#1f8fc4"/><path d="M5,11.5 L11,8.8 L11,11 L5,13.8 Z" fill="#1f8fc4"/><path d="M7,16 L6,18 M11,14 L12,17" stroke="#123a66" stroke-width="1"/></g>
<g transform="translate(244,27.6)"><path d="M2.5,2 L15.5,2 L15.5,15 L2.5,15 L2.5,10.5 L4,9.5 L2.5,8.5 Z" fill="#fff" stroke="#1f8fc4" stroke-width="1.5"/><path d="M7,6 L7,12.5 M11,9 L11,12.5" stroke="#15608f" stroke-width="1.3"/><circle cx="7" cy="5.8" r="1.5" fill="#15608f"/><circle cx="11" cy="5" r="1.2" fill="#15608f"/><circle cx="14" cy="15" r="1.5" fill="#f08a1c"/></g>
<g transform="translate(273,27.6)"><path d="M2.5,2 L2.5,15.5 L17,15.5" fill="none" stroke="#1f8fc4" stroke-width="1.6"/><path d="M4.5,4 L9,4" stroke="#1f8fc4" stroke-width="1.5"/><path d="M8,7.5 L14,7.5" stroke="#e23b2e" stroke-width="1.5"/><path d="M10.5,11 L16.5,11" stroke="#e23b2e" stroke-width="1.3"/><path d="M12.5,13.3 L16.8,13.3" stroke="#f08a1c" stroke-width="1.2"/></g>
<g transform="translate(306,27.6)"><path d="M4,3.5 L8.5,3.5 L8.5,14 L14,14" fill="none" stroke="#1f8fc4" stroke-width="1.1"/><rect x="1.5" y="1.5" width="3.4" height="3.4" rx="0.7" fill="#1f8fc4"/><rect x="12.5" y="12" width="3.6" height="3.6" rx="0.7" fill="#1f8fc4"/><path d="M6.5,7.6 L10.5,7.6 M6.5,9.8 L10.5,9.8" stroke="#e23b2e" stroke-width="1"/></g>
<g transform="translate(331,27.6)"><path d="M3,12 L4.5,5 L8,2.5 L9.5,4" fill="none" stroke="#8a8f98" stroke-width="1.7"/><path d="M9.5,12 L11,6 L14.5,3.5 L16.5,6" fill="none" stroke="#1f8fc4" stroke-width="1.7"/><path d="M1,14.5 L14,14.5" stroke="#e23b2e" stroke-width="1.2"/><path d="M13,12.6 L17,14.5 L13,16.4 Z" fill="#e23b2e"/><rect x="1.5" y="11.5" width="3" height="2.6" fill="#e23b2e"/><rect x="8.2" y="11.5" width="3" height="2.6" fill="#8a8f98"/></g>
<g transform="translate(355,27.6)"><path d="M3,6.5 L5,6.5 L5,2.5 L13.5,2.5 L13.5,6.5 L15.5,6.5 L15.5,15.5 L3,15.5 Z" fill="#1f8fc4"/><path d="M1,7.5 L17.5,7.5 L17.5,11 L1,11 Z" fill="#15608f"/><path d="M6.2,3.5 L6.2,6 M7.9,3.5 L7.9,6 M9.6,3.5 L9.6,6 M11.3,3.5 L11.3,6 M12.8,3.5 L12.8,6" stroke="#f7c520" stroke-width="0.7"/></g>
<g transform="translate(387,27.6)"><path d="M3,2.5 L8.5,6 L3,9.5 Z" fill="#1f8fc4"/><circle cx="13" cy="5.5" r="3.6" fill="#e23b2e"/><circle cx="12.2" cy="4.6" r="1.2" fill="#f7a39b"/><rect x="3" y="11" width="6" height="6" fill="#1f8fc4"/><rect x="11" y="11" width="2.2" height="6" fill="#1f8fc4"/><rect x="14.4" y="11" width="2.2" height="6" fill="#1f8fc4"/></g>
<g transform="translate(418,27.6)"><rect x="6" y="3" width="11.5" height="12.5" fill="#fff" stroke="#1f8fc4" stroke-width="1.2"/><rect x="6" y="3" width="11.5" height="2.6" fill="#1f8fc4"/><path d="M8.5,8 L12,8 M8.5,10.3 L15,10.3 M8.5,12.6 L13,12.6" stroke="#e23b2e" stroke-width="1"/><path d="M13,8 L15.5,8" stroke="#3aa648" stroke-width="1"/><path d="M1.5,4 L4.2,4 L4.2,14 L2.85,17 L1.5,14 Z" fill="#f08a1c" stroke="#a85a10" stroke-width="0.4"/><rect x="1.5" y="2.4" width="2.7" height="2" fill="#e23b2e"/></g>
<g transform="translate(442,27.6)"><rect x="3" y="1" width="11.5" height="16.5" rx="0.8" fill="#1f8fc4"/><rect x="7.2" y="2.8" width="5.6" height="5.4" fill="#f7c520" stroke="#f08a1c" stroke-width="0.6"/><rect x="4.3" y="2.8" width="1.6" height="1.6" fill="#e23b2e"/><rect x="4.3" y="5.8" width="1.6" height="1.6" fill="#bfe3f3"/><path d="M4.5,10.5 L13,10.5 M4.5,13 L13,13 M4.5,15.4 L13,15.4" stroke="#bfe3f3" stroke-width="1.1"/></g>
<g transform="translate(467.5,27.6)"><path d="M3.2,14 A7.6,7.6 0 1 1 15.6,13" fill="none" stroke="#f08a1c" stroke-width="1.6"/><path d="M6,16.5 L7,9 L11,5 L14.5,8.5" fill="none" stroke="#8ccbe6" stroke-width="2.2" stroke-linejoin="round"/><rect x="4.2" y="14.6" width="6" height="2.6" fill="#6fb9da"/><rect x="2.2" y="12.2" width="1.6" height="2.4" fill="#3aa648"/></g>
<g transform="translate(502,27.6)"><circle cx="9" cy="9" r="7.2" fill="#fff" stroke="#f08a1c" stroke-width="1.7"/><circle cx="9" cy="9" r="3.8" fill="none" stroke="#f08a1c" stroke-width="1"/><path d="M9,0 L9,18 M0,9 L18,9" stroke="#f08a1c" stroke-width="0.9"/><path d="M9,9 L9,5.2 A3.8,3.8 0 0 1 12.8,9 Z" fill="#1f8fc4"/><path d="M9,9 L9,12.8 A3.8,3.8 0 0 1 5.2,9 Z" fill="#e23b2e"/></g>
<g transform="translate(542,27.6)"><path d="M1,11 L9,7 L17.5,10.5 L17.5,13.5 L9.5,17.5 L1,14 Z" fill="#cfeaf6" stroke="#8ccbe6" stroke-width="0.7"/><path d="M1,11 L9.5,14.5 L17.5,10.5 M9.5,14.5 L9.5,17.5" fill="none" stroke="#8ccbe6" stroke-width="0.7"/><rect x="7.6" y="0.5" width="2.8" height="11" fill="#8a8f98"/><path d="M7.6,1 L10.4,3 M7.6,4 L10.4,6 M7.6,7 L10.4,9" stroke="#d7dade" stroke-width="0.7"/></g>
<g transform="translate(568,27.6)"><circle cx="5.5" cy="12" r="4.3" fill="#fff" stroke="#1f8fc4" stroke-width="1.3"/><circle cx="5.5" cy="12" r="1.5" fill="#1f8fc4"/><path d="M7,8.5 L14.5,2 L17,4.5 L9.5,11.5" fill="#fff" stroke="#1f8fc4" stroke-width="1.2" stroke-linejoin="round"/><path d="M3,5 L6.5,7 M2.5,7.5 L5,8.5" stroke="#1f8fc4" stroke-width="1"/></g>
<g transform="translate(587,27.6)"><path d="M0.5,3.5 L7,7 L0.5,10.5 Z" fill="#e23b2e"/><path d="M7,5.5 L16,5.5 L16,8.5 L13.5,8.5 L13.5,15.5 L10.2,15.5 L10.2,11 L7,8.5 Z" fill="#fff" stroke="#1f8fc4" stroke-width="1.1" stroke-linejoin="round"/><rect x="10.3" y="1" width="4" height="3.6" fill="#8a5a3a"/><path d="M4,13 L8,13 L8,16" fill="none" stroke="#1f8fc4" stroke-width="1.1"/></g>
<g transform="translate(612.5,27.6)"><path d="M2,16.5 L2,13 L5,13 L7.5,6.5 L10,3.5 L15,8.5 L13.5,10 L10,6.8 L8.4,13 L8.4,16.5 Z" fill="#1f8fc4"/><path d="M12,12.5 L17,12.5 M12.6,12.5 L12.6,15.5 M16.4,12.5 L16.4,15.5" stroke="#6b4a3a" stroke-width="1.1" fill="none"/></g>
<g transform="translate(645,27.6)"><rect x="1" y="5" width="16" height="10" fill="#fff" stroke="#8ccbe6" stroke-width="1"/><path d="M6,17.5 L12,17.5 M9,15 L9,17.5" stroke="#8ccbe6" stroke-width="1.1"/><path d="M7.6,0.5 L10.4,0.5 L10.4,3.5 L12.4,3.5 L9,7.6 L5.6,3.5 L7.6,3.5 Z" fill="#15608f"/><path d="M4,11 Q9,14 14,11" fill="none" stroke="#8ccbe6" stroke-width="0.9"/></g>
<g transform="translate(670,27.6)"><path d="M1,12.5 L10,4 L17,7 L8,16 Z" fill="#eaf6fb" stroke="#8ccbe6" stroke-width="0.9"/><path d="M5,13 L13,5.5" stroke="#8ccbe6" stroke-width="0.8"/><path d="M7,12.5 L12.5,5.5 L14,6.5 L9,13.5 Z" fill="#b8bcc4" stroke="#8a8f98" stroke-width="0.5"/></g>
<g transform="translate(689.5,27.6)"><path d="M2,1 L2,15.5 L17,15.5" fill="none" stroke="#1f8fc4" stroke-width="1.9"/><path d="M6,11 L14,2.5 L16,4.5 L8.5,12.5 Z" fill="#d7dade" stroke="#8a8f98" stroke-width="0.6"/><path d="M3.5,11 L7,9.5 L8.5,13 L5,14.5 Z" fill="#f7c520" stroke="#f08a1c" stroke-width="0.8"/></g>
<g transform="translate(712.5,27.6)"><path d="M1.5,6 L9,2.5 L9,10.5 L1.5,15 Z" fill="#1f8fc4"/><path d="M1.5,15 L9,10.5 L17,12.5 L9.5,17.5 Z" fill="#1b7fb0"/><path d="M9,2.5 L10.5,3 L10.5,11 L9,10.5 Z" fill="#15608f"/><path d="M3,14.5 L9.5,10.8 L11,11.6 L4.6,15.5 Z" fill="#f7c520"/></g>
<g transform="translate(741,27.6)"><path d="M1,10.5 L9.5,5 L17.5,7.5 L9,13.5 Z" fill="#1f8fc4"/><path d="M1,10.5 L9,13.5 L9,16.5 L1,13.5 Z" fill="#15608f"/><path d="M9,13.5 L17.5,7.5 L17.5,10.5 L9,16.5 Z" fill="#1b7fb0"/><path d="M4.5,11 L12.5,5.8 L14.5,6.5 L6.5,11.8 Z" fill="#f7c520" stroke="#f08a1c" stroke-width="0.5"/></g>
<g transform="translate(769.5,27.6)"><path d="M2,6.5 L10,3 L17,5.5 L9,9.5 Z" fill="#1f8fc4"/><path d="M2,6.5 L9,9.5 L9,12 L2,9 Z" fill="#15608f"/><path d="M9,9.5 L17,5.5 L17,8 L9,12 Z" fill="#1b7fb0"/><path d="M1,11.5 L9,8.5 L17.5,11 L9.5,15 Z" fill="#1f8fc4"/><path d="M1,11.5 L9.5,15 L9.5,17.5 L1,14 Z" fill="#15608f"/><path d="M9.5,15 L17.5,11 L17.5,13.5 L9.5,17.5 Z" fill="#1b7fb0"/><rect x="8" y="5" width="3" height="1.6" fill="#f7c520"/><rect x="5" y="11.2" width="3" height="1.6" fill="#f7c520"/></g>
<g transform="translate(796,27.6)"><circle cx="9" cy="9" r="8.7" fill="#2c8dbd"/><circle cx="9" cy="9" r="7.4" fill="url(#gBall)"/><text x="9" y="13.4" text-anchor="middle" font-family="Liberation Sans,sans-serif" font-weight="bold" font-size="12.5" fill="#fff">i</text></g>
<g transform="translate(816,27.6)"><circle cx="9" cy="9" r="8.7" fill="#2c8dbd"/><circle cx="9" cy="9" r="7.4" fill="url(#gBall)"/><text x="9" y="13.4" text-anchor="middle" font-family="Liberation Sans,sans-serif" font-weight="bold" font-size="12.5" fill="#fff">?</text></g>
<!-- ===== quick access (title bar) ===== -->
<g id="qa">
<path d="M1.5,3 L7.5,3 L8,6 L6,9.5 L3,9.5 L1,6 Z" fill="#5b6f86"/><path d="M2.6,3.4 L4.4,6.4 L6.3,3.4 Z" fill="#2b8fd0"/><circle cx="2.6" cy="7.4" r="1.1" fill="#dfe8f0"/><circle cx="6.2" cy="7.4" r="1.1" fill="#dfe8f0"/><rect x="3.6" y="9.5" width="1.8" height="1.6" fill="#2b8fd0"/>
<rect x="11.5" y="2.5" width="0.7" height="8" fill="#cfd2d6"/>
<path d="M20,2 L23.8,2 L25.6,3.8 L25.6,10.5 L20,10.5 Z" fill="#fff" stroke="#d0d3d7" stroke-width="0.5"/>
<path d="M33,5 L36.5,5 L37.5,6 L40.5,6 L40.5,10.5 L33,10.5 Z" fill="#f3c21e"/><path d="M34,4.5 L36,2.2 L38.6,3.2 L37.2,6 Z" fill="#e8631a"/><path d="M33,10.5 L34.5,7 L41.5,7 L40.5,10.5 Z" fill="#f9d856"/>
<path d="M45.5,2.3 L52,2.3 L53,3.3 L53,10.5 L45.5,10.5 Z" fill="#2068a8"/><rect x="47" y="2.3" width="4.3" height="2.6" fill="#cfe6f5"/><rect x="47" y="6.6" width="4.5" height="3.9" fill="#e9f3fa"/><rect x="50" y="7.2" width="1.2" height="3.3" fill="#1a4f80"/>
<path d="M58,6.3 L65.5,6.3 L65.5,10 L58,10 Z" fill="#8b9098"/><path d="M59.5,6.3 L60.5,3 L64.5,3 L64,6.3 Z" fill="#c9ccd1"/><rect x="59.5" y="8.6" width="4.5" height="1.8" fill="#dfe1e4"/>
<path d="M71,6.3 L78.5,6.3 L78.5,10 L71,10 Z" fill="#7b8088"/><path d="M72.5,6.3 L73.5,3.2 L77.5,3.2 L77,6.3 Z" fill="#c9ccd1"/><circle cx="72.6" cy="4" r="1.3" fill="#d63a2a"/>
<path d="M84,7.6 Q87,2.6 90.5,7" fill="none" stroke="#2b8fd0" stroke-width="1.3"/><path d="M82.6,5.6 L84,8.8 L86.4,6.9 Z" fill="#2b8fd0"/>
<path d="M103,7.6 Q100,2.6 96.5,7" fill="none" stroke="#c3c6ca" stroke-width="1.3"/><path d="M104.4,5.6 L103,8.8 L100.6,6.9 Z" fill="#c3c6ca"/>
<circle cx="113" cy="6.3" r="3.6" fill="none" stroke="#2b8fd0" stroke-width="1.2" stroke-dasharray="4.2 1.5"/>
<path d="M121.5,4.4 L125.5,4.4" stroke="#333" stroke-width="0.7"/><path d="M121.5,6 L125.5,6 L123.5,8.2 Z" fill="#333"/>
<path d="M133,3.6 L133,9 L129.8,6.3 Z" fill="#1f7fd0"/>
</g>
<!-- title right buttons -->
<g id="winbtn" fill="none" stroke="#8a8d92" stroke-width="0.7">
<rect x="990.6" y="6" width="3.8" height="2" rx="0.9"/>
<rect x="1001.5" y="5" width="4" height="3.4"/><path d="M1003,5 L1003,3.6 L1007,3.6 L1007,7 L1005.5,7"/>
<path d="M1014.5,3.8 L1018.8,8 M1018.8,3.8 L1014.5,8"/><rect x="1014" y="3.4" width="5.4" height="5" rx="1" stroke-width="0.5"/>
</g>
<!-- tab row right : search etc -->
<g id="tabright">
<path d="M865,20.5 L867.2,17.6 L869.4,20.5 Z" fill="none" stroke="#777" stroke-width="0.7"/>
<rect x="875.5" y="14.6" width="85" height="8.6" fill="#fff" stroke="#d5d8db" stroke-width="0.6"/>
<text x="877.5" y="21.3" font-size="6.2" fill="#8a8d92" font-family="Liberation Sans, Noto Sans CJK SC, sans-serif">查找命令</text>
<circle cx="951.8" cy="18.4" r="2.5" fill="none" stroke="#999" stroke-width="0.7"/><path d="M953.6,20.3 L955.6,22.3" stroke="#999" stroke-width="0.8"/>
<circle cx="969" cy="18.8" r="2.9" fill="none" stroke="#8a8d92" stroke-width="1" stroke-dasharray="1.4 0.9"/><circle cx="969" cy="18.8" r="1.1" fill="none" stroke="#8a8d92" stroke-width="0.6"/>
<circle cx="984.5" cy="18.8" r="3.7" fill="#2a63c0"/><circle cx="984.5" cy="18.8" r="3.7" fill="none" stroke="#9fc0ea" stroke-width="0.6"/><text x="984.5" y="21.2" font-size="6" font-weight="bold" text-anchor="middle" fill="#fff" font-family="Liberation Sans, sans-serif">?</text>
<path d="M992,18 L995.2,18 L993.6,19.8 Z" fill="#333"/>
<rect x="999.8" y="20.4" width="3.6" height="1.3" fill="#111"/>
<rect x="1007.6" y="17.8" width="3.6" height="3.6" fill="none" stroke="#111" stroke-width="0.9"/><path d="M1009,17.8 L1009,16.4 L1012.6,16.4 L1012.6,20 L1011.2,20" fill="none" stroke="#111" stroke-width="0.8"/>
<path d="M1016.6,16.6 L1020.6,20.8 M1020.6,16.6 L1016.6,20.8" stroke="#111" stroke-width="1.1"/>
</g>
<!-- ===== toolbar row ===== -->
<g id="tbrow">
<g fill="#8f9398"><circle cx="2.4" cy="80.6" r="0.45"/><circle cx="2.4" cy="82.6" r="0.45"/><circle cx="2.4" cy="84.6" r="0.45"/><circle cx="2.4" cy="86.6" r="0.45"/></g>
<rect x="5.6" y="78.2" width="12.2" height="11.4" fill="#fbd978" stroke="#e3ad35" stroke-width="0.6"/>
<path d="M8,81 L11,87.5 L12.6,84.5 Z" fill="#1f78c8"/><path d="M11,87.5 L15.5,81.4 L12.6,84.5 Z" fill="#f08a1c"/><path d="M8,81 L12.6,84.5 L15.5,81.4 L12,82.6 Z" fill="#4aa3df"/>
<path d="M24,80.6 L24,87.6 M20.5,84.1 L27.5,84.1" stroke="#b9bcc0" stroke-width="1.5"/>
<path d="M33,84.1 L41,84.1" stroke="#a9acb0" stroke-width="1.5"/>
<rect x="45.6" y="80.6" width="7" height="7" fill="#fff" stroke="#2b8fd0" stroke-width="0.7" stroke-dasharray="1.2 0.8"/><path d="M49,82 L49,86.4 M46.8,84.2 L51.2,84.2" stroke="#e23b2e" stroke-width="0.9"/><path d="M52,79.4 L52,82.4 M50.5,80.9 L53.5,80.9" stroke="#e23b2e" stroke-width="0.8"/>
<path d="M56.6,83.2 L59.4,83.2 L58,85 Z" fill="#333"/>
<path d="M63.8,84 L66.1,79.6 L70.9,79.6 L73.2,84 L70.9,88.4 L66.1,88.4 Z" fill="#f4f9fc" stroke="#3b9ad6" stroke-width="0.9"/>
<rect x="76.9" y="79.6" width="0.6" height="9" fill="#cfd2d6"/>
<rect x="81.4" y="83" width="5.6" height="4.6" fill="#8b8f95"/><path d="M85.4,79.6 L89.8,79.6 L88.2,81.6 L88.2,83.6 L87,83.6 L87,81.6 Z" fill="#a9acb0"/>
<rect x="93" y="79.4" width="68.5" height="8.8" fill="#edeff1" stroke="#dcdfe2" stroke-width="0.4"/>
<path d="M155.8,83.2 L158.4,83.2 L157.1,84.8 Z" fill="#aeb1b5"/>
<rect x="163.4" y="78.2" width="12.4" height="11.2" fill="#fbd978" stroke="#e3ad35" stroke-width="0.6"/>
<path d="M165.4,81.4 L172,80 L174,82.6 L172.6,87 L166.4,86.4 Z" fill="#2b8fd0"/><path d="M167,82.4 L170,81.6 L171,84 L168.4,85.4 Z" fill="#f3c21e"/><path d="M169.4,85.2 L172.6,87 L166.4,86.4 Z" fill="#f08a1c"/>
<rect x="175.8" y="79.2" width="70.2" height="9" fill="#fff" stroke="#dcdfe2" stroke-width="0.4"/>
<path d="M240,83 L243,83 L241.5,84.9 Z" fill="#333"/>
<g stroke="#b4b7bb" stroke-width="0.9" fill="none"><path d="M248.6,81.6 L256,81.6 M248.6,84 L256,84 M252,86.4 L256,86.4"/><path d="M262.4,84.6 L262.4,82 Q265.4,79.6 268.4,82 L268.4,84.6 M261.4,85 L269.6,85"/></g><rect x="266" y="85.2" width="3.2" height="2.4" fill="#b4b7bb"/>
<rect x="273.6" y="79.6" width="0.6" height="9" fill="#cfd2d6"/>
<rect x="279.2" y="80.8" width="1.7" height="6.6" fill="#b1b4b8"/><path d="M282,82.8 L284,84.1 L282,85.4 Z" fill="#d3d5d8"/>
<rect x="292.4" y="80.8" width="1.9" height="6.6" fill="#2b8fd0"/><rect x="294.3" y="81.8" width="0.8" height="4.6" fill="#c04a3a"/><path d="M295.8,82.8 L297.8,84.1 L295.8,85.4 Z" fill="#d3d5d8"/>
<rect x="304.8" y="80.8" width="1.9" height="6.6" fill="#2b8fd0"/><rect x="303.8" y="81.8" width="1" height="4.6" fill="#555"/><path d="M308,82.8 L310,84.1 L308,85.4 Z" fill="#d3d5d8"/>
<rect x="318" y="80.8" width="1.7" height="6.6" fill="#b1b4b8"/><path d="M321,82.8 L323,84.1 L321,85.4 Z" fill="#d3d5d8"/>
<path d="M331,81 L334,83 L332.6,87.4 L330.6,85 Z" fill="#1f78c8"/><path d="M333,83.4 L335.4,84.4 L333.4,86.8 Z" fill="#e23b2e"/>
<rect x="343" y="80.6" width="7.4" height="7.4" fill="#f4f4f4" stroke="#c9ccd0" stroke-width="0.4"/><rect x="343" y="80.6" width="7.4" height="2" fill="#e23b2e"/><rect x="344.4" y="80.9" width="1.8" height="1.2" fill="#f3c21e"/><path d="M343,84.6 L350.4,84.6 M343,86.4 L350.4,86.4" stroke="#c9ccd0" stroke-width="0.5"/>
<rect x="355.4" y="80.4" width="6" height="6.6" fill="#2b8fd0"/><rect x="357.4" y="82.6" width="5.2" height="5.2" fill="#f3a51e"/><circle cx="360" cy="85.2" r="1.2" fill="#e23b2e"/>
<rect x="368.2" y="80.4" width="7.4" height="7.6" fill="#2b8fd0"/><rect x="369.6" y="83" width="3" height="3.6" fill="#f3c21e"/><rect x="372.6" y="82" width="2.4" height="4.6" fill="#7ac36a"/>
<path d="M380.6,87 L380.6,83 L382.6,82 L382.6,87 Z" fill="#1f78c8"/><path d="M383.4,86.6 L384.4,81.6 L388.6,80.6 L388.6,85.6 Z" fill="#f08a1c"/><circle cx="386.4" cy="83" r="1.2" fill="#f9d856"/>
<rect x="392.4" y="79.6" width="0.6" height="9" fill="#cfd2d6"/>
<circle cx="400.9" cy="84" r="3.3" fill="none" stroke="#9b9ea3" stroke-width="0.7"/><path d="M400.9,82 L400.9,84.2 L402.4,85.2" fill="none" stroke="#9b9ea3" stroke-width="0.7"/>
<path d="M412,83.4 L412,81 L415.6,81 L415.6,87.6" fill="none" stroke="#9b9ea3" stroke-width="0.8"/>
<rect x="423.6" y="81.2" width="5.6" height="5.6" fill="#f4f4f4" stroke="#c9ccd0" stroke-width="0.5"/><rect x="424.8" y="82.4" width="3.2" height="3.2" fill="#222"/>
<rect x="433.8" y="79.2" width="68.8" height="9" fill="#eff1f3" stroke="#dcdfe2" stroke-width="0.4"/>
<text x="436" y="86.2" font-size="6.2" fill="#8a8d92" font-family="Liberation Sans, Noto Sans CJK SC, sans-serif">法向</text>
<path d="M497.6,83.2 L500.2,83.2 L498.9,84.8 Z" fill="#aeb1b5"/>
<g fill="none" stroke="#a4a7ab" stroke-width="0.8">
<path d="M507.8,80.6 L507.8,86.6 L509.4,85.2 L510.6,87.6 L511.4,87.2 L510.2,84.8 L512,84.6 Z" fill="#a4a7ab" stroke="none"/>
<circle cx="523" cy="83.8" r="1.6" stroke-width="1.6"/><path d="M519.6,87 L521.6,85"/>
<circle cx="535.9" cy="83.8" r="3"/><path d="M534.9,82.2 L537.7,83.8 L534.9,85.4 Z" fill="#a4a7ab" stroke="none"/>
<path d="M546,83 L547.2,83 M548.6,81.4 L549.8,81.4 M551,83.6 L552.2,83.6 M548.6,85.6 L549.8,85.6" stroke-width="1.1"/>
<path d="M558.2,87 L564.2,80.8"/>
<path d="M571,87 L577,80.8"/><circle cx="577" cy="80.8" r="0.7" fill="#a4a7ab"/>
<circle cx="586.8" cy="83.8" r="3.1"/><circle cx="586.8" cy="83.8" r="0.6" fill="#a4a7ab"/>
<circle cx="599.9" cy="83.8" r="3.1"/>
<path d="M609.4,84.6 L611.4,81 L613.4,86.6 L615.4,82.6 L616.4,84"/>
<path d="M622.4,83 Q624,80.4 625.7,83.8 Q627.4,87 629,84.6"/>
<path d="M634.6,81.2 L642.6,81.2 M636.2,87 Q638.6,79 641,87"/>
<path d="M647.6,87 L653.8,80.8"/>
</g>
<path d="M660,83 L664,81 L668,83.4 L664.6,86.6 L661.6,85.4 Z" fill="#a4a7ab"/>
<path d="M672.4,83 L676.4,81 L680.4,83.4 L677,86.6 L674,85.4 Z" fill="#a4a7ab"/>
</g>
<!-- ===== viewport toolbar ===== -->
<g id="vptb">
<rect x="426.4" y="107.6" width="4.6" height="6" fill="#fff" stroke="#8b8f95" stroke-width="0.6"/><path d="M425,110.6 L429,110.6" stroke="#e23b2e" stroke-width="0.9"/><path d="M424.2,110.6 L426.4,108.9 L426.4,112.3 Z" fill="#e23b2e"/>
<path d="M439.6,108 L441.6,108 L441.6,113 L445.6,113" fill="none" stroke="#4a9a4a" stroke-width="1.1"/><rect x="442.4" y="109" width="2.6" height="2.6" fill="#f3c21e"/><rect x="439" y="107.4" width="2.4" height="2" fill="#2b8fd0"/>
<path d="M449.4,110 L451.8,110 L450.6,111.5 Z" fill="#333"/>
<path d="M459.6,113.4 L463.2,108.2 L464.4,109 L460.8,114.2 Z" fill="#f08a1c"/><path d="M463.2,108.2 L464,107.4 L465,108.2 L464.4,109 Z" fill="#e23b2e"/>
<path d="M472,110.4 L475.6,108.8 L479.4,110.4 L479.4,113.6 L475.6,115.2 L472,113.6 Z" fill="#2b8fd0"/><path d="M472,110.4 L475.6,112 L479.4,110.4 L475.6,108.8 Z" fill="#7cc4ea"/><path d="M474.4,108.6 L476.8,108.6 L476.8,106.8 L474.4,106.8 Z" fill="#f3c21e"/><path d="M473.6,108.6 L477.6,108.6 L475.6,110.6 Z" fill="#f3c21e"/>
<path d="M484.6,109.2 L488.4,107.6 L492.2,109.2 L492.2,113.2 L488.4,115 L484.6,113.2 Z" fill="#1f78c8"/><path d="M484.6,109.2 L488.4,110.8 L492.2,109.2 L488.4,107.6 Z" fill="#7cc4ea"/><path d="M488.4,110.8 L492.2,109.2 L492.2,113.2 L488.4,115 Z" fill="#15568f"/>
<path d="M495.8,110 L498.2,110 L497,111.5 Z" fill="#333"/>
<path d="M504.4,109.2 L508.2,107.6 L512,109.2 L512,113.2 L508.2,115 L504.4,113.2 Z" fill="#fff" stroke="#8b8f95" stroke-width="0.5"/><path d="M504.4,109.2 L508.2,110.8 L512,109.2 M508.2,110.8 L508.2,115" fill="none" stroke="#8b8f95" stroke-width="0.5"/>
<path d="M515.6,110 L518,110 L516.8,111.5 Z" fill="#333"/>
<path d="M524.2,109.2 L528,107.6 L531.8,109.2 L531.8,113.2 L528,115 L524.2,113.2 Z" fill="#1f78c8"/><path d="M524.2,109.2 L528,110.8 L528,115 L524.2,113.2 Z" fill="#f08a1c"/><path d="M524.2,109.2 L528,110.8 L531.8,109.2 L528,107.6 Z" fill="#7cc4ea"/>
<path d="M535,110 L537.4,110 L536.2,111.5 Z" fill="#333"/>
<rect x="543.8" y="107.2" width="7.6" height="7.6" fill="#1f6fb8"/><circle cx="547.6" cy="111" r="2.6" fill="#f9e08a" stroke="#c9a020" stroke-width="0.5"/>
<path d="M554.8,110 L557.2,110 L556,111.5 Z" fill="#333"/>
<circle cx="567.6" cy="111" r="2.4" fill="none" stroke="#e23b2e" stroke-width="0.8"/><path d="M567.6,107 L567.6,115 M563.6,111 L571.6,111" stroke="#e23b2e" stroke-width="0.6"/><circle cx="567.6" cy="111" r="0.9" fill="#1f78c8"/>
<path d="M574.4,110 L576.8,110 L575.6,111.5 Z" fill="#333"/>
<rect x="583.8" y="107.4" width="7.2" height="7.2" fill="#fff" stroke="#8b8f95" stroke-width="0.6"/><rect x="585" y="112" width="1.6" height="1.4" fill="#1f78c8"/><rect x="588.4" y="108.6" width="1.4" height="1.2" fill="#1f78c8"/>
<path d="M598,107 L598,114 M603.8,107 L603.8,114 M598,110 L603.8,110" fill="none" stroke="#2b8fd0" stroke-width="0.9"/><path d="M597.4,114.4 L604.4,114.4" stroke="#e0703a" stroke-width="0.9"/>
<path d="M607.6,110 L610,110 L608.8,111.5 Z" fill="#333"/>
<rect x="616" y="107" width="5.4" height="7.6" fill="#7b7f88"/><circle cx="619" cy="110.4" r="0.9" fill="#2b8fd0"/>
</g>
<text x="152" y="111.3" font-size="5.85" fill="#222" font-family="Liberation Sans, Noto Sans CJK SC, sans-serif">&lt;单击中键&gt;继续.</text>
<text x="152" y="118.8" font-size="5.85" fill="#222" font-family="Liberation Sans, Noto Sans CJK SC, sans-serif">&lt;Shift +鼠标右键&gt; 显示选择过滤器.</text>
<!-- ===== left panel icons ===== -->
<g id="lp">
<path d="M4.4,108 L8.4,108 L8.4,120.6 L12.6,120.6" fill="none" stroke="#2b8fd0" stroke-width="0.9"/><rect x="3" y="106.6" width="2.6" height="2.6" rx="0.5" fill="#2b8fd0"/><rect x="11.4" y="119.2" width="2.8" height="2.8" rx="0.5" fill="#2b8fd0"/><rect x="7.2" y="113" width="2.4" height="2.4" fill="#e0604a"/>
<path d="M3,134.4 L6.4,132.8 L9.8,134.4 L9.8,138 L6.4,139.6 L3,138 Z" fill="#d8eef8" stroke="#4aa3df" stroke-width="0.6"/><path d="M3,134.4 L6.4,136 L9.8,134.4 M6.4,136 L6.4,139.6" fill="none" stroke="#4aa3df" stroke-width="0.5"/><path d="M6.4,140 L6.4,146 L10.4,146 M6.4,142.6 L10.4,142.6 M10.4,138 L13.6,138" fill="none" stroke="#8b8f95" stroke-width="0.6"/><rect x="10.6" y="144.4" width="3" height="2.6" fill="#fff" stroke="#8b8f95" stroke-width="0.5"/>
<rect x="5.6" y="160.6" width="4.6" height="4" fill="#2b8fd0"/><rect x="2.6" y="166.4" width="4.4" height="4" fill="#2b8fd0"/><rect x="8.8" y="166.4" width="4.6" height="4" fill="#eef6fb" stroke="#9ccbe8" stroke-width="0.5"/><path d="M8,164.6 L8,165.6 L4.8,165.6 L4.8,166.4 M8,165.6 L11,165.6 L11,166.4" fill="none" stroke="#5f6368" stroke-width="0.5"/>
<rect x="2.4" y="185.8" width="11.2" height="11" fill="#eaf6fb" stroke="#2b8fd0" stroke-width="0.9"/><rect x="2.4" y="185.8" width="11.2" height="2.2" fill="#2b8fd0"/><path d="M5,190.8 L8,189.6 L11,190.8 L11,194 L8,195.4 L5,194 Z" fill="#f3a51e"/><path d="M5,190.8 L8,192 L11,190.8 L8,189.6 Z" fill="#f9d856"/>
<rect x="2.4" y="210.6" width="11.4" height="10.6" fill="#cfe8f6" stroke="#2b8fd0" stroke-width="0.9"/><path d="M3,220.6 L6.4,215.6 L9,218.6 L10.6,217 L13.2,220.6 Z" fill="#2b8fd0"/><circle cx="10.4" cy="213.6" r="1.6" fill="#f08a1c"/><rect x="3.4" y="211.8" width="3" height="2.6" fill="#e0604a"/>
<circle cx="8.6" cy="237.6" r="2.6" fill="#f0a03a"/><path d="M3.6,246 Q4,240.6 8.6,240.6 Q13.2,240.6 13.6,246 Z" fill="#2b8fd0"/><path d="M6.4,236.6 Q8.6,233.6 11,236.6" fill="#7a4a20"/>
<!-- buttons -->
<path d="M22.6,111.2 L25.4,114 L30,108.4" fill="none" stroke="#2ea02e" stroke-width="1.8"/>
<path d="M38.4,107.6 L45,114.2 M45,107.6 L38.4,114.2" stroke="#e03a2e" stroke-width="1.9"/>
<rect x="54.6" y="108.2" width="6.6" height="6.4" fill="#fff" stroke="#c93a2e" stroke-width="1"/><path d="M56,110.6 L58,112.8 L61.6,108" fill="none" stroke="#2ea02e" stroke-width="1.3"/>
<circle cx="120.6" cy="110.8" r="3.6" fill="#2a63c0"/><circle cx="120.6" cy="110.8" r="3.6" fill="none" stroke="#9fc0ea" stroke-width="0.7"/><rect x="120" y="110" width="1.2" height="2.8" fill="#fff"/><circle cx="120.6" cy="108.8" r="0.7" fill="#fff"/>
<path d="M132.4,107.6 L135,107.6 L136.4,109 L136.4,114.4 L132.4,114.4 Z" fill="#fff" stroke="#2b8fd0" stroke-width="0.7"/><path d="M134,110 L136.4,112 L134,114 Z" fill="#f08a1c"/>
<!-- gear -->
<circle cx="80.3" cy="127.6" r="4.1" fill="none" stroke="#2b86c8" stroke-width="2.6"/><circle cx="80.3" cy="127.6" r="5.6" fill="none" stroke="#2b86c8" stroke-width="1.9" stroke-dasharray="2.2 2.2"/>
</g>
<!-- ===== status bar icons ===== -->
<g id="sb">
<rect x="790.4" y="537.6" width="11" height="10.4" fill="#fbe7a0" stroke="#e3ad35" stroke-width="0.6"/><rect x="793.2" y="539.4" width="5.4" height="6.6" fill="#fff" stroke="#8b6a4a" stroke-width="0.6"/><path d="M795.9,541 L795.9,544.6" stroke="#c0503a" stroke-width="0.9"/>
<rect x="806.4" y="539.2" width="8.8" height="5.6" fill="#2b8fd0"/><rect x="807.4" y="540.2" width="6.8" height="3.2" fill="#9fd3ef"/><path d="M808.6,546.4 L813,546.4 M810.8,544.8 L810.8,546.4" stroke="#5f6368" stroke-width="0.8"/>
<rect x="822.4" y="539" width="8.4" height="7" fill="#cfe8f6" stroke="#7cc4ea" stroke-width="0.6"/><rect x="822.4" y="539" width="8.4" height="1.8" fill="#7cc4ea"/><path d="M824,543.4 L829.4,543.4" stroke="#fff" stroke-width="0.8"/>
</g>

</svg>

</body></html>
